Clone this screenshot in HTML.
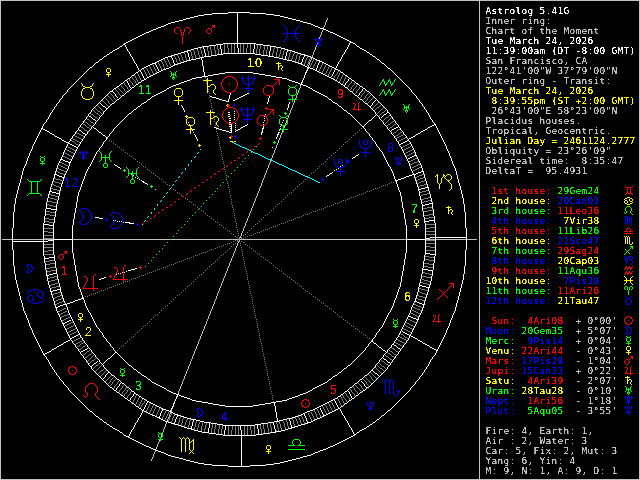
<!DOCTYPE html>
<html><head><meta charset="utf-8"><title>Astrolog 5.41G</title>
<style>
html,body{margin:0;padding:0;background:#000;overflow:hidden}
svg{display:block}
#chart path,#chart use{fill:none;stroke-width:1;stroke-linecap:butt;shape-rendering:crispEdges}
.sb{font-family:"DejaVu Sans Mono","Liberation Mono",monospace;font-size:9.5px;letter-spacing:0.281px;white-space:pre}
.hn{font-family:"Liberation Sans",sans-serif;font-size:12.5px;text-anchor:middle}
.hn2{text-anchor:start;letter-spacing:1.05px}
</style></head><body>
<svg width="640" height="480" viewBox="0 0 640 480">
<defs><path id="s1x2" d="M-6 -8h3M4 -8h3M-7 -7h1M-3 -7h1M3 -7h1M7 -7h1M-8 -6h1M-2 -6h1M2 -6h1M8 -6h1M-8 -5h1M-2 -5h1M2 -5h1M8 -5h1M-8 -4h1M-2 -4h1M2 -4h1M8 -4h1M-7 -3h1M-1 -3h1M1 -3h1M7 -3h1M-6 -2h1M-1 -2h1M1 -2h1M6 -2h1M-1 -1h1M1 -1h1M-1 0h1M1 0h1M0 1h1M0 2h1M0 3h1M0 4h1M0 5h1M0 6h1M0 7h1M0 8h1"/><path id="o5x1" d="M2 -4h3M3 -3h2M2 -2h1M4 -2h1M-2 -1h2M1 -1h1M-3 0h1M0 0h1M-4 1h1M1 1h1M-4 2h1M1 2h1M-3 3h1M0 3h1M-2 4h2"/><path id="s2x2" d="M-6 -8h1M6 -8h1M-5 -7h1M5 -7h1M-5 -6h1M5 -6h1M-4 -5h2M3 -5h2M-2 -4h5M-4 -3h2M3 -3h2M-5 -2h1M5 -2h1M-5 -1h1M5 -1h1M-6 0h1M6 0h1M-6 1h1M6 1h1M-6 2h1M6 2h1M-6 3h1M6 3h1M-6 4h1M6 4h1M-5 5h1M5 5h1M-5 6h1M5 6h1M-4 7h2M3 7h2M-2 8h5"/><path id="o4x1" d="M-1 -4h3M-2 -3h1M2 -3h1M-2 -2h1M2 -2h1M-2 -1h1M2 -1h1M-1 0h3M0 1h1M-2 2h5M0 3h1M0 4h1"/><path id="s3x2" d="M-6 -8h1M8 -8h1M-5 -7h1M7 -7h1M-4 -6h11M-2 -5h1M4 -5h1M-2 -4h1M4 -4h1M-2 -3h1M4 -3h1M-2 -2h1M4 -2h1M-2 -1h1M4 -1h1M-2 0h1M4 0h1M-2 1h1M4 1h1M-2 2h1M4 2h1M-2 3h1M4 3h1M-2 4h1M4 4h1M-2 5h1M4 5h1M-4 6h11M-5 7h1M7 7h1M-6 8h1M8 8h1"/><path id="o3x1" d="M-2 -4h1M2 -4h1M-1 -3h3M-2 -2h1M2 -2h1M-2 -1h1M2 -1h1M-2 0h1M2 0h1M-1 1h3M0 2h1M-2 3h5M0 4h1"/><path id="s4x2" d="M-2 -7h5M-5 -6h3M3 -6h1M-6 -5h1M4 -5h3M-7 -4h1M3 -4h1M7 -4h1M-8 -3h1M2 -3h1M8 -3h1M2 -2h1M8 -2h1M-6 -1h3M2 -1h1M8 -1h1M-7 0h1M-3 0h1M3 0h1M7 0h1M-8 1h1M-2 1h1M4 1h3M-8 2h1M-2 2h1M-8 3h1M-2 3h1M8 3h1M-7 4h1M-3 4h1M7 4h1M-6 5h3M6 5h1M-3 6h1M3 6h3M-2 7h5"/><path id="o2x1" d="M-2 -4h3M-3 -3h1M1 -3h2M-2 -2h1M2 -2h1M-1 -1h1M3 -1h1M-1 0h1M3 0h1M-1 1h1M3 1h1M-2 2h1M2 2h1M-3 3h1M1 3h2M-2 4h3"/><path id="s5x2" d="M-2 -8h5M-3 -7h1M3 -7h1M-4 -6h1M4 -6h1M-5 -5h1M5 -5h1M-6 -4h1M6 -4h1M-6 -3h1M6 -3h1M-6 -2h1M6 -2h1M-6 -1h1M6 -1h1M-6 0h1M6 0h1M-5 1h1M5 1h1M-4 2h1M4 2h1M-4 3h1M4 3h1M-8 4h1M-4 4h1M4 4h1M-7 5h1M-5 5h1M5 5h1M-6 6h1M6 6h1M7 7h1M8 8h1"/><path id="o1x1" d="M-1 -4h3M-3 -3h2M2 -3h2M-3 -2h1M3 -2h1M-4 -1h1M4 -1h1M-4 0h1M0 0h1M4 0h1M-4 1h1M4 1h1M-3 2h1M3 2h1M-3 3h2M2 3h2M-1 4h3"/><path id="s6x2" d="M-8 -8h1M-4 -8h1M0 -8h1M-7 -7h1M-5 -7h1M-3 -7h1M-1 -7h1M1 -7h1M-6 -6h1M-2 -6h1M2 -6h1M6 -6h1M-6 -5h1M-2 -5h1M2 -5h1M5 -5h2M-6 -4h1M-2 -4h1M2 -4h1M4 -4h1M6 -4h1M-6 -3h1M-2 -3h1M2 -3h2M6 -3h1M-6 -2h1M-2 -2h1M2 -2h1M6 -2h1M-6 -1h1M-2 -1h1M2 -1h1M6 -1h1M-6 0h1M-2 0h1M2 0h1M6 0h1M-6 1h1M-2 1h1M2 1h1M6 1h1M-6 2h1M-2 2h1M2 2h1M6 2h1M-6 3h1M-2 3h1M2 3h1M6 3h1M-6 4h1M-2 4h1M2 4h1M6 4h1M-6 5h1M-2 5h1M3 5h1M5 5h1M-6 6h1M-2 6h1M4 6h1M3 7h1M5 7h1M2 8h1M6 8h1"/><path id="s7x2" d="M-2 -4h5M-3 -3h1M3 -3h1M-4 -2h1M4 -2h1M-4 -1h1M4 -1h1M-4 0h1M4 0h1M-3 1h1M3 1h1M-8 2h7M2 2h7M-8 6h17"/><path id="s8x2" d="M-8 -8h1M-4 -8h1M0 -8h1M-7 -7h1M-5 -7h1M-3 -7h1M-1 -7h1M1 -7h1M-6 -6h1M-2 -6h1M2 -6h1M-6 -5h1M-2 -5h1M2 -5h1M-6 -4h1M-2 -4h1M2 -4h1M-6 -3h1M-2 -3h1M2 -3h1M-6 -2h1M-2 -2h1M2 -2h1M-6 -1h1M-2 -1h1M2 -1h1M-6 0h1M-2 0h1M2 0h1M-6 1h1M-2 1h1M2 1h1M-6 2h1M-2 2h1M2 2h1M-6 3h1M-2 3h1M2 3h1M7 3h1M-6 4h1M-2 4h1M2 4h1M6 4h3M-6 5h1M-2 5h1M2 5h1M7 5h1M-6 6h1M-2 6h1M2 6h1M7 6h1M3 7h1M6 7h1M4 8h2"/><path id="o10x1" d="M-3 -4h1M0 -4h1M3 -4h1M-3 -3h1M-1 -3h1M1 -3h1M3 -3h1M-3 -2h1M0 -2h1M3 -2h1M-2 -1h1M2 -1h1M-1 0h3M0 1h1M-2 2h5M0 3h1M0 4h1"/><path id="s9x2" d="M4 -8h5M7 -7h2M6 -6h1M8 -6h1M5 -5h1M8 -5h1M4 -4h1M8 -4h1M3 -3h1M-6 -2h1M2 -2h1M-5 -1h1M1 -1h1M-4 0h1M0 0h1M-3 1h1M-1 1h1M-2 2h1M-3 3h1M-1 3h1M-4 4h1M0 4h1M-5 5h1M1 5h1M-6 6h1M2 6h1M-7 7h1M-8 8h1"/><path id="o6x1" d="M3 -4h1M-3 -3h2M2 -3h1M-1 -2h1M2 -2h1M-1 -1h1M2 -1h1M-2 0h1M2 0h1M-2 1h1M2 1h1M-3 2h1M2 2h1M-3 3h8M2 4h1"/><path id="s10x2" d="M-6 -8h1M0 -8h1M4 -8h3M-7 -7h2M0 -7h2M3 -7h1M7 -7h1M-8 -6h1M-6 -6h1M0 -6h1M2 -6h1M8 -6h1M-6 -5h1M-1 -5h1M1 -5h1M8 -5h1M-6 -4h1M-2 -4h1M2 -4h1M8 -4h1M-6 -3h1M-2 -3h1M3 -3h1M7 -3h1M-6 -2h1M-2 -2h1M4 -2h3M-6 -1h1M-2 -1h1M5 -1h1M-6 0h1M-2 0h1M6 0h1M-5 1h1M-3 1h1M7 1h1M-4 2h1M8 2h1M-4 3h1M8 3h1M-4 4h1M8 4h1M-4 5h1M8 5h1M-4 6h1M8 6h1M7 7h1M6 8h1"/><path id="o7x1" d="M-1 -4h1M-3 -3h5M-1 -2h1M-1 -1h1M1 -1h2M-1 0h2M3 0h1M-1 1h1M3 1h1M-1 2h1M2 2h1M-1 3h1M2 3h1M3 4h1"/><path id="s11x2" d="M-4 -8h1M2 -8h1M8 -8h1M-5 -7h2M1 -7h2M7 -7h1M-5 -6h1M-3 -6h1M1 -6h1M3 -6h1M7 -6h1M-6 -5h1M-3 -5h1M0 -5h1M3 -5h1M6 -5h1M-7 -4h1M-3 -4h1M-1 -4h1M3 -4h1M5 -4h1M-7 -3h1M-2 -3h2M4 -3h2M-8 -2h1M-2 -2h1M4 -2h1M-4 2h1M2 2h1M8 2h1M-5 3h2M1 3h2M7 3h1M-5 4h1M-3 4h1M1 4h1M3 4h1M7 4h1M-6 5h1M-3 5h1M0 5h1M3 5h1M6 5h1M-7 6h1M-3 6h1M-1 6h1M3 6h1M5 6h1M-7 7h1M-2 7h2M4 7h2M-8 8h1M-2 8h1M4 8h1"/><path id="o8x1" d="M-3 -4h1M3 -4h1M-2 -3h1M2 -3h1M-2 -2h1M0 -2h1M2 -2h1M-2 -1h5M-2 0h1M0 0h1M2 0h1M-3 1h1M0 1h1M3 1h1M-1 2h3M-1 3h1M1 3h1M0 4h1"/><path id="s12x2" d="M-8 -8h1M8 -8h1M-7 -7h1M7 -7h1M-6 -6h1M6 -6h1M-5 -5h1M5 -5h1M-5 -4h1M5 -4h1M-4 -3h1M4 -3h1M-4 -2h1M4 -2h1M-4 -1h1M4 -1h1M-8 0h17M-4 1h1M4 1h1M-4 2h1M4 2h1M-4 3h1M4 3h1M-5 4h1M5 4h1M-5 5h1M5 5h1M-6 6h1M6 6h1M-7 7h1M7 7h1M-8 8h1M8 8h1"/><path id="o9x1" d="M-3 -4h1M0 -4h1M3 -4h1M-4 -3h2M-1 -3h3M3 -3h2M-3 -2h1M0 -2h1M3 -2h1M-2 -1h1M0 -1h1M2 -1h1M-1 0h3M0 1h1M-2 2h5M0 3h1M0 4h1"/><path id="o10x2" d="M-6 -8h1M-1 -8h3M6 -8h1M-6 -7h1M-2 -7h1M2 -7h1M6 -7h1M-6 -6h1M-2 -6h1M2 -6h1M6 -6h1M-6 -5h1M-2 -5h1M2 -5h1M6 -5h1M-6 -4h1M-1 -4h3M6 -4h1M-5 -3h1M5 -3h1M-5 -2h1M5 -2h1M-4 -1h2M3 -1h2M-2 0h5M0 1h1M0 2h1M0 3h1M-4 4h9M0 5h1M0 6h1M0 7h1M0 8h1"/><path id="o9x2" d="M-6 -8h1M0 -8h1M6 -8h1M-6 -7h1M0 -7h1M6 -7h1M-7 -6h3M-2 -6h5M5 -6h3M-6 -5h1M0 -5h1M6 -5h1M-6 -4h1M0 -4h1M6 -4h1M-5 -3h1M0 -3h1M5 -3h1M-5 -2h1M0 -2h1M5 -2h1M-4 -1h2M0 -1h1M3 -1h2M-2 0h5M0 1h1M0 2h1M0 3h1M-4 4h9M0 5h1M0 6h1M0 7h1M0 8h1"/><path id="o8x2" d="M-6 -8h1M6 -8h1M-5 -7h1M5 -7h1M-4 -6h1M4 -6h1M-4 -5h1M4 -5h1M-4 -4h1M0 -4h1M4 -4h1M-4 -3h1M0 -3h1M4 -3h1M-4 -2h9M-4 -1h1M0 -1h1M4 -1h1M-4 0h1M0 0h1M4 0h1M-5 1h1M0 1h1M5 1h1M-6 2h1M0 2h1M6 2h1M0 3h1M-1 4h3M-2 5h1M2 5h1M-2 6h1M2 6h1M-2 7h1M2 7h1M-1 8h3"/><path id="o7x2" d="M-2 -8h1M-2 -7h1M-6 -6h9M-2 -5h1M-2 -4h1M-2 -3h1M-2 -2h1M2 -2h3M-2 -1h1M1 -1h1M5 -1h1M-2 0h3M6 0h1M-2 1h1M6 1h1M-2 2h1M6 2h1M-2 3h1M5 3h1M-2 4h1M4 4h1M-2 5h1M4 5h1M-2 6h1M4 6h1M5 7h1M6 8h1"/><path id="o6x2" d="M6 -8h1M5 -7h1M-5 -6h2M4 -6h1M-3 -5h1M4 -5h1M-2 -4h1M4 -4h1M-2 -3h1M4 -3h1M-2 -2h1M4 -2h1M-3 -1h1M4 -1h1M-3 0h1M4 0h1M-4 1h1M4 1h1M-4 2h1M4 2h1M-5 3h1M4 3h1M-5 4h1M4 4h1M-6 5h1M4 5h1M-6 6h15M4 7h1M4 8h1"/><path id="o5x2" d="M3 -8h6M7 -7h2M6 -6h1M8 -6h1M5 -5h1M8 -5h1M4 -4h1M8 -4h1M3 -3h1M8 -3h1M-5 -2h5M2 -2h1M-6 -1h1M0 -1h2M-7 0h1M1 0h1M-8 1h1M2 1h1M-8 2h1M2 2h1M-8 3h1M2 3h1M-8 4h1M2 4h1M-8 5h1M2 5h1M-7 6h1M1 6h1M-6 7h1M0 7h1M-5 8h5"/><path id="o4x2" d="M-2 -8h5M-3 -7h1M3 -7h1M-4 -6h1M4 -6h1M-4 -5h1M4 -5h1M-4 -4h1M4 -4h1M-4 -3h1M4 -3h1M-4 -2h1M4 -2h1M-3 -1h1M3 -1h1M-2 0h5M0 1h1M0 2h1M0 3h1M-4 4h9M0 5h1M0 6h1M0 7h1M0 8h1"/><path id="o3x2" d="M-4 -8h1M4 -8h1M-3 -7h1M3 -7h1M-2 -6h5M-3 -5h1M3 -5h1M-4 -4h1M4 -4h1M-4 -3h1M4 -3h1M-4 -2h1M4 -2h1M-4 -1h1M4 -1h1M-4 0h1M4 0h1M-3 1h1M3 1h1M-2 2h5M0 3h1M0 4h1M0 5h1M-4 6h9M0 7h1M0 8h1"/><path id="o2x2" d="M-4 -8h5M-5 -7h1M1 -7h2M-6 -6h1M3 -6h1M-5 -5h1M4 -5h1M-4 -4h1M5 -4h1M-3 -3h1M5 -3h1M-3 -2h1M6 -2h1M-2 -1h1M6 -1h1M-2 0h1M6 0h1M-2 1h1M6 1h1M-3 2h1M6 2h1M-3 3h1M5 3h1M-4 4h1M5 4h1M-5 5h1M4 5h1M-6 6h1M3 6h1M-5 7h1M1 7h2M-4 8h5"/><path id="o1x2" d="M-2 -8h5M-4 -7h2M3 -7h2M-5 -6h1M5 -6h1M-6 -5h1M6 -5h1M-7 -4h1M7 -4h1M-7 -3h1M7 -3h1M-8 -2h1M8 -2h1M-8 -1h1M8 -1h1M-8 0h1M0 0h1M8 0h1M-8 1h1M8 1h1M-8 2h1M8 2h1M-7 3h1M7 3h1M-7 4h1M7 4h1M-6 5h1M6 5h1M-5 6h1M5 6h1M-4 7h2M3 7h2M-2 8h5"/><path id="s3x1" d="M-3 -4h1M4 -4h1M-2 -3h6M-1 -2h1M2 -2h1M-1 -1h1M2 -1h1M-1 0h1M2 0h1M-1 1h1M2 1h1M-1 2h1M2 2h1M-2 3h6M-3 4h1M4 4h1"/><path id="s4x1" d="M-1 -3h3M-3 -2h2M2 -2h2M-4 -1h1M1 -1h1M4 -1h1M-3 0h2M1 0h1M4 0h1M-4 1h1M-1 1h1M2 1h2M-4 2h1M-1 2h1M4 2h1M-3 3h2M2 3h2M-1 4h3"/><path id="s5x1" d="M-1 -4h3M-2 -3h1M2 -3h1M-3 -2h1M3 -2h1M-3 -1h1M3 -1h1M-3 0h1M3 0h1M-2 1h1M2 1h1M-4 2h1M-2 2h1M2 2h1M-3 3h1M3 3h1M4 4h1"/><path id="s6x1" d="M-4 -4h1M-2 -4h1M0 -4h1M-3 -3h1M-1 -3h1M1 -3h1M3 -3h1M-3 -2h1M-1 -2h1M1 -2h3M-3 -1h1M-1 -1h1M1 -1h1M3 -1h1M-3 0h1M-1 0h1M1 0h1M3 0h1M-3 1h1M-1 1h1M1 1h1M3 1h1M-3 2h1M-1 2h1M1 2h1M3 2h1M-3 3h1M-1 3h1M2 3h1M1 4h1M3 4h1"/><path id="s7x1" d="M-1 -2h3M-2 -1h1M2 -1h1M-2 0h1M2 0h1M-4 1h4M1 1h4M-4 3h9"/><path id="s8x1" d="M-4 -4h1M-2 -4h1M0 -4h1M-3 -3h1M-1 -3h1M1 -3h1M-3 -2h1M-1 -2h1M1 -2h1M-3 -1h1M-1 -1h1M1 -1h1M-3 0h1M-1 0h1M1 0h1M-3 1h1M-1 1h1M1 1h1M-3 2h1M-1 2h1M1 2h1M4 2h1M-3 3h1M-1 3h1M1 3h1M4 3h1M2 4h2"/><path id="s9x1" d="M2 -4h3M3 -3h2M2 -2h1M4 -2h1M-3 -1h1M1 -1h1M-2 0h1M0 0h1M-1 1h1M-2 2h1M0 2h1M-3 3h1M1 3h1M-4 4h1"/><path id="s10x1" d="M-3 -4h1M0 -4h1M2 -4h2M-4 -3h2M0 -3h2M4 -3h1M-3 -2h1M-1 -2h1M1 -2h1M4 -2h1M-3 -1h1M-1 -1h1M2 -1h2M-3 0h1M-1 0h1M3 0h1M-2 1h1M4 1h1M-2 2h1M4 2h1M-2 3h1M4 3h1M3 4h1"/><path id="s11x1" d="M-2 -4h1M1 -4h1M4 -4h1M-3 -3h2M0 -3h2M3 -3h1M-3 -2h1M-1 -2h2M2 -2h2M-4 -1h1M-1 -1h1M2 -1h1M-2 1h1M1 1h1M4 1h1M-3 2h2M0 2h2M3 2h1M-3 3h1M-1 3h2M2 3h2M-4 4h1M-1 4h1M2 4h1"/><path id="s12x1" d="M-4 -4h1M4 -4h1M-3 -3h1M3 -3h1M-2 -2h1M2 -2h1M-2 -1h1M2 -1h1M-4 0h9M-2 1h1M2 1h1M-2 2h1M2 2h1M-3 3h1M3 3h1M-4 4h1M4 4h1"/><path id="s1x1" d="M-3 -4h2M2 -4h2M-4 -3h1M-1 -3h1M1 -3h1M4 -3h1M-4 -2h1M-1 -2h1M1 -2h1M4 -2h1M-3 -1h1M-1 -1h1M1 -1h1M3 -1h1M0 0h1M0 1h1M0 2h1M0 3h1M0 4h1"/><path id="s2x1" d="M-3 -4h1M3 -4h1M-2 -3h1M2 -3h1M-1 -2h3M-2 -1h1M2 -1h1M-3 0h1M3 0h1M-3 1h1M3 1h1M-3 2h1M3 2h1M-2 3h1M2 3h1M-1 4h3"/>
<filter id="crisp2" x="0" y="0" width="640" height="480" filterUnits="userSpaceOnUse" color-interpolation-filters="sRGB"><feComponentTransfer><feFuncA type="discrete" tableValues="0 0 1 1 1"/></feComponentTransfer></filter>
<filter id="crisp" x="0" y="0" width="640" height="480" filterUnits="userSpaceOnUse" color-interpolation-filters="sRGB"><feComponentTransfer><feFuncA type="table" tableValues="0 0 0 1 1 1 1"/></feComponentTransfer></filter>
</defs>
<rect x="0" y="0" width="640" height="480" fill="#000"/>
<g id="chart" transform="translate(0 .5)">
<g id="axes">
<path d="M327 18h1M327 19h1M326 20h1M326 21h1M325 22h1M325 23h1M325 24h1M324 25h1M324 26h1M323 27h1M323 28h1M323 29h1M322 30h1M322 31h1M321 32h1M321 33h1M321 34h1M320 35h1M320 36h1M319 37h1M319 38h1M319 39h1M318 40h1M318 41h1M317 42h1M317 43h1M317 44h1M316 45h1M316 46h1M315 47h1M315 48h1M315 49h1M314 50h1M314 51h1M313 52h1M313 53h1M313 54h1M312 55h1M312 56h1M311 57h1M311 58h1M311 59h1M310 60h1M310 61h1M309 62h1M309 63h1M309 64h1M308 65h1M308 66h1M307 67h1M307 68h1M307 69h1M306 70h1M306 71h1M305 72h1M305 73h1M305 74h1M304 75h1M304 76h1M304 77h1M303 78h1M303 79h1M302 80h1M302 81h1M302 82h1M301 83h1M301 84h1M300 85h1M300 86h1M300 87h1M299 88h1M299 89h1M298 90h1M298 91h1M298 92h1M297 93h1M297 94h1M296 95h1M296 96h1M296 97h1M295 98h1M295 99h1M294 100h1M294 101h1M294 102h1M293 103h1M293 104h1M292 105h1M292 106h1M292 107h1M291 108h1M291 109h1M290 110h1M290 111h1M290 112h1M289 113h1M289 114h1M288 115h1M288 116h1M288 117h1M287 118h1M287 119h1M286 120h1M286 121h1M286 122h1M285 123h1M285 124h1M284 125h1M284 126h1M284 127h1M283 128h1M283 129h1M282 130h1M282 131h1M282 132h1M281 133h1M281 134h1M280 135h1M280 136h1M280 137h1M279 138h1M279 139h1M278 140h1M278 141h1M278 142h1M277 143h1M277 144h1M276 145h1M276 146h1M276 147h1M275 148h1M275 149h1M274 150h1M274 151h1M274 152h1M273 153h1M273 154h1M272 155h1M272 156h1M272 157h1M271 158h1M271 159h1M270 160h1M270 161h1M270 162h1M269 163h1M269 164h1M268 165h1M268 166h1M268 167h1M267 168h1M267 169h1M266 170h1M266 171h1M266 172h1M265 173h1M265 174h1M264 175h1M264 176h1M264 177h1M263 178h1M263 179h1M262 180h1M262 181h1M262 182h1M261 183h1M261 184h1M261 185h1M260 186h1M260 187h1M259 188h1M259 189h1M259 190h1M258 191h1M258 192h1M257 193h1M257 194h1M257 195h1M256 196h1M256 197h1M255 198h1M255 199h1M255 200h1M254 201h1M254 202h1M253 203h1M253 204h1M253 205h1M252 206h1M252 207h1M251 208h1M251 209h1M251 210h1M250 211h1M250 212h1M249 213h1M249 214h1M249 215h1M248 216h1M248 217h1M247 218h1M247 219h1M247 220h1M246 221h1M246 222h1M245 223h1M245 224h1M245 225h1M244 226h1M244 227h1M243 228h1M243 229h1M243 230h1M242 231h1M242 232h1M241 233h1M241 234h1M241 235h1M240 236h1M240 237h1M239 238h1M2 239h475M239 240h1M238 241h1M238 242h1M237 243h1M237 244h1M237 245h1M236 246h1M236 247h1M235 248h1M235 249h1M235 250h1M234 251h1M234 252h1M233 253h1M233 254h1M233 255h1M232 256h1M232 257h1M231 258h1M231 259h1M231 260h1M230 261h1M230 262h1M229 263h1M229 264h1M229 265h1M228 266h1M228 267h1M227 268h1M227 269h1M227 270h1M226 271h1M226 272h1M225 273h1M225 274h1M225 275h1M224 276h1M224 277h1M223 278h1M223 279h1M223 280h1M222 281h1M222 282h1M221 283h1M221 284h1M221 285h1M220 286h1M220 287h1M219 288h1M219 289h1M219 290h1M218 291h1M218 292h1M217 293h1M217 294h1M217 295h1M216 296h1M216 297h1M216 298h1M215 299h1M215 300h1M214 301h1M214 302h1M214 303h1M213 304h1M213 305h1M212 306h1M212 307h1M212 308h1M211 309h1M211 310h1M210 311h1M210 312h1M210 313h1M209 314h1M209 315h1M208 316h1M208 317h1M208 318h1M207 319h1M207 320h1M206 321h1M206 322h1M206 323h1M205 324h1M205 325h1M204 326h1M204 327h1M204 328h1M203 329h1M203 330h1M202 331h1M202 332h1M202 333h1M201 334h1M201 335h1M200 336h1M200 337h1M200 338h1M199 339h1M199 340h1M198 341h1M198 342h1M198 343h1M197 344h1M197 345h1M196 346h1M196 347h1M196 348h1M195 349h1M195 350h1M194 351h1M194 352h1M194 353h1M193 354h1M193 355h1M192 356h1M192 357h1M192 358h1M191 359h1M191 360h1M190 361h1M190 362h1M190 363h1M189 364h1M189 365h1M188 366h1M188 367h1M188 368h1M187 369h1M187 370h1M186 371h1M186 372h1M186 373h1M185 374h1M185 375h1M184 376h1M184 377h1M184 378h1M183 379h1M183 380h1M182 381h1M182 382h1M182 383h1M181 384h1M181 385h1M180 386h1M180 387h1M180 388h1M179 389h1M179 390h1M178 391h1M178 392h1M178 393h1M177 394h1M177 395h1M176 396h1M176 397h1M176 398h1M175 399h1M175 400h1M174 401h1M174 402h1M174 403h1M173 404h1M173 405h1M173 406h1M172 407h1M172 408h1M171 409h1M171 410h1M171 411h1M170 412h1M170 413h1M169 414h1M169 415h1M169 416h1M168 417h1M168 418h1M167 419h1M167 420h1M167 421h1M166 422h1M166 423h1M165 424h1M165 425h1M165 426h1M164 427h1M164 428h1M163 429h1M163 430h1M163 431h1M162 432h1M162 433h1M161 434h1M161 435h1M161 436h1M160 437h1M160 438h1M159 439h1M159 440h1M159 441h1M158 442h1M158 443h1M157 444h1M157 445h1M157 446h1M156 447h1M156 448h1M155 449h1M155 450h1M155 451h1M154 452h1M154 453h1M153 454h1M153 455h1M153 456h1M152 457h1M152 458h1M151 459h1M151 460h1" stroke="#c0c0c0"/>
</g>
<g id="ticks">
<path d="M224 44h1M227 44h1M231 44h1M234 44h1M240 44h1M243 44h1M247 44h1M250 44h1M214 45h1M217 45h1M224 45h1M227 45h1M231 45h1M234 45h1M240 45h1M243 45h1M247 45h1M250 45h1M257 45h1M260 45h1M264 45h1M210 46h1M214 46h1M217 46h1M224 46h1M227 46h1M231 46h1M234 46h1M240 46h1M243 46h1M247 46h1M250 46h1M257 46h1M260 46h1M264 46h1M267 46h1M207 47h1M210 47h1M214 47h1M217 47h1M224 47h1M227 47h1M231 47h1M234 47h1M240 47h1M243 47h1M247 47h1M250 47h1M257 47h1M260 47h1M264 47h1M267 47h1M274 47h1M197 48h1M200 48h1M207 48h1M210 48h1M214 48h1M217 48h1M224 48h1M228 48h1M231 48h1M234 48h1M240 48h1M243 48h1M246 48h1M250 48h1M257 48h1M260 48h1M264 48h1M267 48h1M274 48h1M277 48h1M281 48h1M193 49h1M197 49h1M200 49h1M207 49h1M210 49h1M214 49h1M218 49h1M224 49h1M228 49h1M231 49h1M234 49h1M240 49h1M243 49h1M246 49h1M250 49h1M256 49h1M259 49h1M264 49h1M267 49h1M273 49h1M277 49h1M281 49h1M284 49h1M190 50h1M193 50h1M197 50h1M201 50h1M207 50h1M211 50h1M215 50h1M218 50h1M224 50h1M228 50h1M231 50h1M234 50h1M240 50h1M243 50h1M246 50h1M250 50h1M256 50h1M259 50h1M263 50h1M266 50h1M273 50h1M277 50h1M280 50h1M284 50h1M190 51h1M194 51h1M198 51h1M201 51h1M208 51h1M211 51h1M215 51h1M218 51h1M224 51h1M228 51h1M231 51h1M234 51h1M240 51h1M243 51h1M246 51h1M250 51h1M256 51h1M259 51h1M263 51h1M266 51h1M273 51h1M277 51h1M280 51h1M283 51h1M290 51h1M184 52h1M191 52h1M194 52h1M198 52h1M201 52h1M208 52h1M211 52h1M215 52h1M218 52h1M224 52h1M228 52h1M231 52h1M234 52h1M240 52h1M243 52h1M246 52h1M250 52h1M256 52h1M259 52h1M263 52h1M266 52h1M273 52h1M276 52h1M280 52h1M283 52h1M290 52h1M294 52h1M180 53h1M184 53h1M191 53h1M194 53h1M198 53h1M201 53h1M208 53h1M211 53h1M215 53h1M218 53h1M224 53h1M256 53h1M259 53h1M263 53h1M266 53h1M272 53h1M276 53h1M280 53h1M283 53h1M289 53h1M294 53h1M297 53h1M177 54h1M180 54h1M185 54h1M191 54h1M194 54h1M198 54h1M202 54h1M208 54h1M211 54h1M215 54h1M263 54h1M266 54h1M272 54h1M276 54h1M279 54h1M283 54h1M289 54h1M293 54h1M297 54h1M300 54h1M174 55h1M177 55h1M181 55h1M185 55h1M191 55h1M195 55h1M199 55h1M202 55h1M208 55h1M272 55h1M276 55h1M279 55h1M282 55h1M289 55h1M293 55h1M296 55h1M300 55h1M174 56h1M178 56h1M181 56h1M185 56h1M192 56h1M195 56h1M199 56h1M202 56h1M276 56h1M279 56h1M282 56h1M289 56h1M292 56h1M296 56h1M299 56h1M307 56h1M175 57h1M178 57h1M182 57h1M185 57h1M192 57h1M195 57h1M199 57h1M282 57h1M288 57h1M292 57h1M296 57h1M299 57h1M307 57h1M310 57h1M167 58h1M175 58h1M179 58h1M182 58h1M186 58h1M192 58h1M288 58h1M292 58h1M296 58h1M299 58h1M306 58h1M310 58h1M164 59h1M167 59h1M176 59h1M179 59h1M182 59h1M186 59h1M288 59h1M291 59h1M295 59h1M299 59h1M306 59h1M309 59h1M313 59h1M161 60h1M164 60h1M168 60h1M176 60h1M179 60h1M183 60h1M186 60h1M291 60h1M295 60h1M298 60h1M305 60h1M309 60h1M313 60h1M316 60h1M161 61h1M165 61h1M168 61h1M176 61h1M180 61h1M183 61h1M295 61h1M298 61h1M305 61h1M308 61h1M312 61h1M316 61h1M158 62h1M162 62h1M165 62h1M169 62h1M177 62h1M180 62h1M298 62h1M305 62h1M308 62h1M312 62h1M315 62h1M158 63h1M162 63h1M166 63h1M169 63h1M177 63h1M304 63h1M308 63h1M311 63h1M315 63h1M322 63h1M152 64h1M159 64h1M163 64h1M166 64h1M170 64h1M304 64h1M307 64h1M311 64h1M314 64h1M322 64h1M326 64h1M153 65h1M159 65h1M163 65h1M167 65h1M170 65h1M307 65h1M310 65h1M314 65h1M321 65h1M325 65h1M149 66h1M153 66h1M160 66h1M163 66h1M167 66h1M310 66h1M313 66h1M321 66h1M325 66h1M329 66h1M150 67h1M154 67h1M160 67h1M164 67h1M313 67h1M320 67h1M324 67h1M328 67h1M332 67h1M146 68h1M150 68h1M154 68h1M161 68h1M164 68h1M320 68h1M324 68h1M328 68h1M331 68h1M143 69h1M147 69h1M151 69h1M155 69h1M161 69h1M319 69h1M323 69h1M327 69h1M331 69h1M144 70h1M147 70h1M151 70h1M155 70h1M319 70h1M323 70h1M327 70h1M330 70h1M144 71h1M148 71h1M152 71h1M156 71h1M322 71h1M326 71h1M330 71h1M338 71h1M145 72h1M148 72h1M152 72h1M156 72h1M322 72h1M326 72h1M329 72h1M337 72h1M340 72h1M137 73h1M145 73h1M149 73h1M153 73h1M325 73h1M329 73h1M337 73h1M339 73h1M138 74h1M146 74h1M149 74h1M328 74h1M336 74h1M339 74h1M343 74h1M134 75h1M138 75h1M146 75h1M150 75h1M328 75h1M335 75h1M338 75h1M342 75h1M131 76h1M135 76h1M139 76h1M147 76h1M334 76h1M338 76h1M342 76h1M346 76h1M132 77h1M135 77h1M139 77h1M334 77h1M337 77h1M341 77h1M345 77h1M128 78h1M132 78h1M136 78h1M140 78h1M333 78h1M337 78h1M341 78h1M345 78h1M129 79h1M133 79h1M136 79h1M140 79h1M336 79h1M340 79h1M344 79h1M129 80h1M134 80h1M137 80h1M141 80h1M340 80h1M344 80h1M352 80h1M130 81h1M135 81h1M137 81h1M339 81h1M343 81h1M351 81h1M123 82h1M131 82h1M135 82h1M138 82h1M343 82h1M351 82h1M355 82h1M124 83h1M132 83h1M136 83h1M342 83h1M350 83h1M354 83h1M120 84h1M124 84h1M132 84h1M349 84h1M354 84h1M357 84h1M121 85h1M125 85h1M133 85h1M348 85h1M353 85h1M356 85h1M121 86h1M126 86h1M348 86h1M352 86h1M356 86h1M360 86h1M117 87h1M122 87h1M127 87h1M347 87h1M351 87h1M355 87h1M359 87h1M118 88h1M123 88h1M127 88h1M351 88h1M354 88h1M359 88h1M115 89h1M119 89h1M124 89h1M128 89h1M350 89h1M353 89h1M358 89h1M116 90h1M120 90h1M124 90h1M353 90h1M357 90h1M365 90h1M117 91h1M121 91h1M125 91h1M352 91h1M356 91h1M364 91h1M118 92h1M122 92h1M356 92h1M364 92h1M110 93h1M118 93h1M123 93h1M355 93h1M363 93h1M368 93h1M111 94h1M119 94h1M362 94h1M367 94h1M107 95h1M112 95h1M120 95h1M361 95h1M366 95h1M370 95h1M108 96h1M113 96h1M361 96h1M365 96h1M369 96h1M109 97h1M113 97h1M360 97h1M365 97h1M368 97h1M373 97h1M105 98h1M110 98h1M114 98h1M364 98h1M367 98h1M372 98h1M106 99h1M111 99h1M115 99h1M363 99h1M367 99h1M371 99h1M102 100h1M107 100h1M112 100h1M366 100h1M370 100h1M103 101h1M108 101h1M113 101h1M365 101h1M369 101h1M104 102h1M108 102h1M368 102h1M378 102h1M105 103h1M109 103h1M367 103h1M377 103h1M106 104h1M110 104h1M376 104h1M97 105h1M107 105h1M375 105h1M380 105h1M98 106h1M108 106h1M374 106h1M379 106h1M99 107h1M373 107h1M377 107h2M383 107h1M95 108h1M100 108h1M372 108h1M376 108h1M382 108h1M96 109h1M101 109h1M375 109h1M381 109h1M93 110h1M97 110h1M102 110h1M374 110h1M380 110h1M385 110h1M94 111h1M98 111h2M103 111h1M379 111h1M384 111h1M95 112h1M100 112h1M378 112h1M382 112h2M90 113h1M96 113h2M101 113h1M377 113h1M381 113h1M91 114h2M98 114h1M380 114h1M93 115h1M99 115h1M379 115h1M389 115h1M94 116h1M388 116h1M95 117h2M386 117h2M391 117h1M86 118h1M97 118h1M385 118h1M390 118h1M87 119h2M384 119h1M389 119h1M89 120h1M383 120h1M388 120h1M394 120h1M84 121h1M90 121h1M387 121h1M392 121h2M85 122h2M91 122h2M386 122h1M391 122h1M82 123h1M87 123h1M93 123h1M385 123h1M390 123h1M396 123h1M83 124h2M88 124h1M388 124h2M394 124h2M85 125h1M89 125h2M387 125h1M393 125h1M80 126h1M86 126h1M91 126h1M392 126h1M81 127h2M87 127h2M390 127h2M83 128h1M89 128h1M389 128h1M400 128h1M84 129h1M398 129h2M85 130h2M397 130h1M87 131h1M396 131h1M402 131h1M76 132h1M394 132h2M400 132h2M77 133h2M393 133h1M399 133h1M79 134h2M398 134h1M403 134h1M74 135h1M81 135h2M396 135h2M401 135h2M75 136h2M83 136h1M395 136h1M399 136h2M77 137h2M397 137h2M405 137h1M72 138h1M79 138h2M396 138h1M403 138h2M73 139h2M81 139h1M401 139h2M71 140h1M75 140h2M399 140h2M72 141h2M77 141h2M398 141h1M74 142h1M79 142h1M75 143h1M409 143h1M76 144h2M407 144h2M78 145h1M405 145h2M67 146h1M403 146h2M410 146h1M68 147h2M402 147h1M408 147h2M70 148h2M406 148h2M66 149h1M72 149h2M404 149h2M412 149h1M67 150h2M74 150h2M403 150h1M410 150h2M69 151h2M408 151h2M64 152h1M71 152h2M406 152h2M413 152h2M65 153h2M73 153h1M405 153h1M411 153h2M67 154h2M409 154h2M69 155h2M407 155h2M63 156h2M71 156h2M406 156h1M65 157h2M67 158h2M415 158h2M69 159h2M413 159h2M411 160h2M409 161h2M417 161h2M60 162h2M414 162h3M62 163h2M412 163h2M64 164h2M410 164h2M418 164h2M59 165h2M66 165h2M416 165h2M61 166h2M414 166h2M63 167h2M412 167h2M419 167h2M57 168h2M65 168h2M417 168h2M59 169h2M415 169h2M61 170h3M413 170h2M56 171h2M64 171h2M58 172h2M60 173h3M63 174h2M422 174h2M419 175h3M417 176h2M415 177h2M423 177h2M54 178h2M420 178h3M56 179h4M418 179h2M60 180h3M416 180h2M424 180h2M53 181h2M421 181h3M55 182h4M419 182h2M59 183h3M417 183h2M52 184h2M424 184h3M54 185h2M420 185h4M56 186h3M418 186h2M59 187h2M51 188h2M53 189h4M57 190h3M426 190h3M422 191h4M420 192h2M427 193h3M49 194h2M423 194h4M51 195h4M421 195h2M55 196h3M48 197h2M428 197h3M50 198h4M424 198h4M54 199h3M421 199h3M428 200h3M48 201h4M424 201h4M52 202h5M422 202h2M47 204h2M49 205h4M53 206h3M427 207h5M423 208h4M428 210h5M46 211h4M424 211h4M50 212h5M45 214h5M429 214h5M50 215h5M424 215h5M429 217h5M45 218h4M425 218h4M49 219h5M45 221h4M49 222h5M425 224h10M430 227h5M44 228h9M426 228h4M44 231h4M426 231h9M48 232h5M426 234h9M44 235h9M44 238h9M426 240h9M426 243h9M44 244h9M426 246h4M44 247h9M430 247h5M48 250h5M426 250h9M44 251h4M44 254h10M425 256h4M429 257h5M425 259h4M49 260h5M429 260h5M45 261h4M50 263h5M424 263h5M45 264h5M429 264h5M424 266h4M50 267h5M428 267h5M46 268h4M51 270h5M47 271h4M423 272h2M425 273h4M429 274h3M54 276h3M422 276h4M50 277h4M426 277h5M48 278h2M55 279h3M422 279h2M51 280h4M424 280h4M48 281h3M428 281h3M421 282h2M55 283h3M423 283h4M51 284h4M427 284h3M49 285h2M56 286h3M52 287h4M50 288h2M419 288h2M421 289h4M425 290h3M418 291h2M58 292h3M420 292h2M54 293h4M422 293h3M52 294h2M425 294h2M60 295h2M417 295h2M57 296h3M419 296h4M55 297h2M423 297h3M53 298h2M61 298h2M416 298h2M58 299h3M418 299h4M56 300h2M422 300h3M54 301h2M62 301h2M59 302h3M57 303h2M55 304h2M414 304h2M416 305h2M418 306h3M413 307h2M421 307h2M64 308h2M415 308h2M62 309h2M417 309h3M60 310h2M412 310h2M420 310h2M58 311h2M65 311h2M414 311h2M63 312h2M416 312h2M61 313h2M411 313h2M418 313h2M59 314h2M67 314h2M413 314h2M64 315h3M415 315h2M62 316h2M417 316h2M60 317h2M68 317h2M66 318h2M64 319h2M408 319h2M62 320h2M410 320h2M412 321h2M71 322h2M406 322h1M414 322h2M69 323h2M407 323h2M67 324h2M409 324h2M65 325h2M73 325h1M405 325h1M411 325h2M64 326h1M71 326h2M406 326h2M413 326h2M69 327h2M408 327h2M67 328h2M75 328h1M403 328h1M410 328h2M66 329h1M73 329h2M404 329h2M412 329h1M71 330h2M406 330h2M69 331h2M76 331h1M408 331h2M68 332h1M74 332h2M410 332h2M72 333h2M400 333h1M70 334h2M401 334h2M69 335h1M403 335h1M399 336h1M404 336h1M80 337h1M400 337h2M405 337h2M78 338h2M402 338h2M407 338h1M76 339h2M397 339h1M404 339h2M74 340h2M82 340h1M398 340h2M406 340h1M73 341h1M80 341h2M400 341h2M78 342h2M83 342h1M395 342h1M402 342h2M76 343h2M81 343h2M396 343h2M404 343h1M75 344h1M80 344h1M398 344h2M79 345h1M85 345h1M400 345h2M77 346h2M83 346h2M402 346h1M76 347h1M82 347h1M391 347h1M81 348h1M392 348h2M79 349h2M394 349h1M78 350h1M89 350h1M389 350h1M395 350h1M87 351h2M390 351h2M396 351h2M86 352h1M387 352h1M392 352h1M398 352h1M85 353h1M91 353h1M388 353h2M393 353h1M83 354h2M89 354h2M390 354h1M394 354h2M82 355h1M88 355h1M93 355h1M385 355h1M391 355h1M396 355h1M87 356h1M92 356h1M386 356h2M392 356h2M85 357h2M91 357h1M388 357h1M394 357h1M84 358h1M90 358h1M95 358h1M389 358h1M89 359h1M94 359h1M390 359h2M88 360h1M92 360h2M381 360h1M392 360h1M87 361h1M91 361h1M382 361h2M90 362h1M384 362h1M89 363h1M99 363h1M379 363h1M385 363h1M98 364h1M380 364h1M386 364h2M96 365h2M101 365h1M377 365h1M381 365h1M388 365h1M95 366h1M100 366h1M378 366h1M382 366h2M94 367h1M99 367h1M375 367h1M379 367h1M384 367h1M93 368h1M98 368h1M104 368h1M376 368h1M380 368h2M385 368h1M97 369h1M103 369h1M377 369h1M382 369h1M96 370h1M101 370h2M106 370h1M378 370h1M383 370h1M95 371h1M100 371h1M105 371h1M379 371h1M99 372h1M104 372h1M370 372h1M380 372h1M98 373h1M103 373h1M371 373h1M381 373h1M102 374h1M368 374h1M372 374h1M101 375h1M111 375h1M369 375h1M373 375h1M100 376h1M110 376h1M370 376h1M374 376h1M109 377h1M113 377h1M365 377h1M371 377h1M375 377h1M108 378h1M112 378h1M366 378h1M371 378h1M376 378h1M107 379h1M111 379h1M115 379h1M363 379h1M367 379h1M372 379h1M106 380h1M110 380h1M114 380h1M364 380h1M368 380h1M373 380h1M105 381h1M110 381h1M113 381h1M118 381h1M365 381h1M369 381h1M109 382h1M112 382h1M117 382h1M366 382h1M370 382h1M108 383h1M112 383h1M117 383h1M358 383h1M366 383h1M371 383h1M111 384h1M116 384h1M359 384h1M367 384h1M110 385h1M115 385h1M123 385h1M355 385h1M360 385h1M368 385h1M114 386h1M122 386h1M356 386h1M361 386h1M114 387h1M122 387h1M126 387h1M353 387h1M357 387h1M361 387h1M113 388h1M121 388h1M125 388h1M354 388h1M358 388h1M362 388h1M120 389h1M125 389h1M128 389h1M350 389h1M354 389h1M359 389h1M363 389h1M119 390h1M124 390h1M127 390h1M351 390h1M355 390h1M360 390h1M119 391h1M123 391h1M127 391h1M131 391h1M351 391h1M356 391h1M361 391h1M118 392h1M122 392h1M126 392h1M130 392h1M352 392h1M357 392h1M122 393h1M125 393h1M130 393h1M345 393h1M353 393h1M357 393h1M121 394h1M124 394h1M129 394h1M346 394h1M354 394h1M358 394h1M124 395h1M128 395h1M136 395h1M342 395h1M346 395h1M354 395h1M123 396h1M127 396h1M135 396h1M340 396h1M343 396h1M347 396h1M355 396h1M127 397h1M135 397h1M139 397h1M341 397h1M343 397h1M348 397h1M126 398h1M134 398h1M138 398h1M337 398h1M341 398h1M344 398h1M349 398h1M134 399h1M138 399h1M142 399h1M338 399h1M342 399h1M345 399h1M349 399h1M133 400h1M137 400h1M141 400h1M145 400h1M338 400h1M342 400h1M346 400h1M350 400h1M133 401h1M137 401h1M141 401h1M144 401h1M339 401h1M343 401h1M346 401h1M132 402h1M136 402h1M140 402h1M144 402h1M331 402h1M339 402h1M343 402h1M347 402h1M136 403h1M140 403h1M143 403h1M150 403h1M328 403h1M332 403h1M340 403h1M344 403h1M135 404h1M139 404h1M142 404h1M149 404h1M329 404h1M332 404h1M340 404h1M139 405h1M141 405h1M149 405h1M153 405h1M325 405h1M329 405h1M333 405h1M341 405h1M138 406h1M141 406h1M148 406h1M152 406h1M156 406h1M322 406h1M326 406h1M330 406h1M333 406h1M140 407h1M148 407h1M152 407h1M155 407h1M323 407h1M326 407h1M330 407h1M334 407h1M147 408h1M151 408h1M155 408h1M159 408h1M323 408h1M327 408h1M331 408h1M334 408h1M147 409h1M151 409h1M154 409h1M159 409h1M317 409h1M324 409h1M327 409h1M331 409h1M335 409h1M146 410h1M150 410h1M154 410h1M158 410h1M314 410h1M317 410h1M324 410h1M328 410h1M332 410h1M146 411h1M150 411h1M153 411h1M158 411h1M165 411h1M314 411h1M318 411h1M325 411h1M328 411h1M149 412h1M153 412h1M157 412h1M165 412h1M168 412h1M311 412h1M315 412h1M318 412h1M325 412h1M329 412h1M152 413h1M157 413h1M164 413h1M168 413h1M171 413h1M308 413h1M311 413h1M315 413h1M319 413h1M326 413h1M152 414h1M156 414h1M164 414h1M167 414h1M171 414h1M174 414h1M308 414h1M312 414h1M316 414h1M319 414h1M326 414h1M156 415h1M163 415h1M167 415h1M170 415h1M174 415h1M301 415h1M309 415h1M312 415h1M316 415h1M320 415h1M163 416h1M166 416h1M170 416h1M173 416h1M180 416h1M298 416h1M301 416h1M309 416h1M313 416h1M316 416h1M320 416h1M162 417h1M166 417h1M169 417h1M173 417h1M180 417h1M183 417h1M295 417h1M298 417h1M302 417h1M310 417h1M313 417h1M317 417h1M162 418h1M165 418h1M169 418h1M172 418h1M179 418h1M183 418h1M187 418h1M292 418h1M295 418h1M299 418h1M302 418h1M310 418h1M314 418h1M317 418h1M165 419h1M169 419h1M172 419h1M179 419h1M182 419h1M187 419h1M190 419h1M292 419h1M296 419h1M299 419h1M303 419h1M311 419h1M314 419h1M168 420h1M172 420h1M179 420h1M182 420h1M186 420h1M190 420h1M286 420h1M293 420h1M296 420h1M300 420h1M303 420h1M311 420h1M168 421h1M171 421h1M179 421h1M182 421h1M186 421h1M189 421h1M196 421h1M279 421h1M283 421h1M286 421h1M293 421h1M297 421h1M300 421h1M303 421h1M171 422h1M178 422h1M182 422h1M185 422h1M189 422h1M196 422h1M199 422h1M202 422h1M276 422h1M279 422h1M283 422h1M287 422h1M293 422h1M297 422h1M300 422h1M304 422h1M178 423h1M181 423h1M185 423h1M189 423h1M195 423h1M199 423h1M202 423h1M206 423h1M270 423h1M276 423h1M279 423h1M284 423h1M287 423h1M293 423h1M297 423h1M301 423h1M304 423h1M178 424h1M181 424h1M185 424h1M189 424h1M195 424h1M198 424h1M202 424h1M206 424h1M212 424h1M215 424h1M263 424h1M267 424h1M270 424h1M277 424h1M280 424h1M284 424h1M287 424h1M294 424h1M298 424h1M301 424h1M181 425h1M184 425h1M188 425h1M195 425h1M198 425h1M202 425h1M205 425h1M212 425h1M215 425h1M219 425h1M222 425h1M254 425h1M260 425h1M263 425h1M267 425h1M270 425h1M277 425h1M280 425h1M284 425h1M287 425h1M294 425h1M298 425h1M184 426h1M188 426h1M195 426h1M198 426h1M201 426h1M205 426h1M212 426h1M215 426h1M219 426h1M222 426h1M228 426h1M232 426h1M235 426h1M238 426h1M244 426h1M247 426h1M250 426h1M254 426h1M260 426h1M263 426h1M267 426h1M270 426h1M277 426h1M280 426h1M284 426h1M288 426h1M294 426h1M188 427h1M194 427h1M198 427h1M201 427h1M205 427h1M212 427h1M215 427h1M219 427h1M222 427h1M228 427h1M232 427h1M235 427h1M238 427h1M244 427h1M247 427h1M250 427h1M254 427h1M260 427h1M263 427h1M267 427h1M271 427h1M277 427h1M280 427h1M285 427h1M288 427h1M194 428h1M197 428h1M201 428h1M205 428h1M211 428h1M215 428h1M219 428h1M222 428h1M228 428h1M232 428h1M235 428h1M238 428h1M244 428h1M247 428h1M250 428h1M254 428h1M260 428h1M263 428h1M268 428h1M271 428h1M278 428h1M281 428h1M285 428h1M288 428h1M194 429h1M197 429h1M201 429h1M204 429h1M211 429h1M214 429h1M218 429h1M221 429h1M228 429h1M232 429h1M235 429h1M238 429h1M244 429h1M247 429h1M250 429h1M254 429h1M261 429h1M264 429h1M268 429h1M271 429h1M278 429h1M281 429h1M285 429h1M197 430h1M201 430h1M204 430h1M211 430h1M214 430h1M218 430h1M221 430h1M228 430h1M231 430h1M235 430h1M238 430h1M244 430h1M247 430h1M251 430h1M254 430h1M261 430h1M264 430h1M268 430h1M271 430h1M278 430h1M281 430h1M204 431h1M211 431h1M214 431h1M218 431h1M221 431h1M228 431h1M231 431h1M235 431h1M238 431h1M244 431h1M247 431h1M251 431h1M254 431h1M261 431h1M264 431h1M268 431h1M271 431h1M211 432h1M214 432h1M218 432h1M221 432h1M228 432h1M231 432h1M235 432h1M238 432h1M244 432h1M247 432h1M251 432h1M254 432h1M261 432h1M264 432h1M268 432h1M214 433h1M218 433h1M221 433h1M228 433h1M231 433h1M235 433h1M238 433h1M244 433h1M247 433h1M251 433h1M254 433h1M261 433h1M264 433h1M228 434h1M231 434h1M235 434h1M238 434h1M244 434h1M247 434h1M251 434h1M254 434h1" stroke="#808080"/>
<path d="M237 44h1M254 44h1M220 45h1M237 45h1M254 45h1M220 46h1M237 46h1M254 46h1M270 46h1M203 47h1M220 47h1M237 47h1M254 47h1M270 47h1M203 48h1M220 48h1M238 48h1M254 48h1M270 48h1M204 49h1M221 49h1M238 49h1M253 49h1M270 49h1M204 50h1M221 50h1M238 50h1M253 50h1M270 50h1M287 50h1M187 51h1M204 51h1M221 51h1M238 51h1M253 51h1M269 51h1M287 51h1M187 52h1M204 52h1M221 52h1M238 52h1M253 52h1M269 52h1M286 52h1M188 53h1M205 53h1M221 53h1M253 53h1M269 53h1M286 53h1M188 54h1M205 54h1M269 54h1M286 54h1M188 55h1M205 55h1M269 55h1M286 55h1M304 55h1M171 56h1M188 56h1M285 56h1M304 56h1M171 57h1M189 57h1M285 57h1M303 57h1M172 58h1M189 58h1M285 58h1M303 58h1M172 59h1M189 59h1M302 59h1M173 60h1M302 60h1M173 61h1M302 61h1M319 61h1M173 62h1M301 62h1M319 62h1M155 63h1M174 63h1M301 63h1M318 63h1M155 64h1M174 64h1M318 64h1M156 65h1M317 65h1M156 66h1M317 66h1M157 67h1M317 67h1M157 68h1M316 68h1M158 69h1M316 69h1M335 69h1M158 70h1M334 70h1M140 71h1M334 71h1M141 72h1M333 72h1M141 73h1M333 73h1M142 74h1M332 74h1M142 75h1M332 75h1M143 76h1M331 76h1M143 77h1M144 78h1M349 78h1M348 79h1M126 80h1M348 80h1M127 81h1M347 81h1M127 82h1M346 82h1M128 83h1M345 83h1M128 84h1M345 84h1M129 85h1M344 85h1M129 86h1M130 87h1M363 88h1M362 89h1M362 90h1M112 91h1M361 91h1M113 92h1M360 92h1M114 93h1M359 93h1M115 94h1M359 94h1M115 95h1M358 95h1M116 96h1M117 97h1M375 100h1M374 101h1M373 102h1M100 103h1M372 103h1M101 104h1M372 104h1M102 105h1M371 105h1M103 106h2M370 106h1M105 107h1M106 108h1M387 112h1M386 113h1M384 114h2M88 115h1M383 115h1M89 116h2M382 116h1M91 117h1M381 117h1M92 118h1M93 119h2M95 120h1M398 126h1M396 127h2M394 128h2M78 129h1M392 129h2M79 130h2M391 130h1M81 131h1M82 132h1M83 133h2M85 134h1M407 140h1M405 141h2M403 142h2M69 143h1M401 143h2M70 144h2M400 144h1M72 145h2M74 146h2M76 147h1M414 155h2M412 156h2M410 157h2M408 158h2M61 159h2M63 160h2M65 161h3M68 162h2M421 171h2M418 172h3M416 173h2M55 174h2M414 174h2M57 175h2M59 176h3M62 177h2M425 187h3M421 188h4M419 189h2M50 191h2M52 192h4M56 193h3M429 203h3M425 204h4M423 205h2M46 208h5M51 209h5M429 220h5M425 221h4M44 224h5M49 225h5M430 237h5M426 238h4M48 240h5M44 241h4M425 253h5M430 254h5M49 257h5M45 258h4M423 269h5M428 270h5M53 273h3M49 274h4M47 275h2M420 285h2M422 286h4M426 287h3M57 289h3M53 290h4M51 291h2M415 301h2M417 302h2M419 303h3M63 304h2M422 304h2M60 305h3M58 306h2M56 307h2M409 316h2M411 317h2M413 318h3M416 319h2M69 320h2M67 321h2M65 322h2M63 323h2M402 331h1M403 332h2M405 333h2M78 334h1M407 334h2M76 335h2M409 335h1M74 336h2M72 337h2M71 338h1M393 344h1M394 345h2M396 346h1M397 347h1M87 348h1M398 348h2M85 349h2M400 349h1M83 350h2M81 351h2M80 352h1M383 358h1M384 359h2M386 360h1M97 361h1M387 361h1M96 362h1M388 362h2M94 363h2M390 363h1M93 364h1M92 365h1M91 366h1M372 370h1M373 371h1M108 372h1M374 372h1M107 373h1M375 373h2M106 374h1M377 374h1M105 375h1M378 375h1M105 376h1M104 377h1M103 378h1M361 381h1M362 382h1M120 383h1M363 383h1M119 384h1M364 384h1M119 385h1M364 385h1M118 386h1M365 386h1M117 387h1M366 387h1M116 388h1M116 389h1M115 390h1M348 391h1M349 392h1M134 393h1M349 393h1M133 394h1M350 394h1M133 395h1M350 395h1M132 396h1M351 396h1M131 397h1M351 397h1M130 398h1M352 398h1M130 399h1M129 400h1M334 400h1M335 401h1M147 402h1M335 402h1M146 403h1M336 403h1M146 404h1M336 404h1M145 405h1M337 405h1M145 406h1M337 406h1M144 407h1M338 407h1M144 408h1M320 408h1M143 409h1M162 409h1M320 409h1M162 410h1M321 410h1M161 411h1M321 411h1M161 412h1M322 412h1M160 413h1M322 413h1M160 414h1M304 414h1M323 414h1M160 415h1M177 415h1M304 415h1M323 415h1M159 416h1M177 416h1M305 416h1M159 417h1M176 417h1M305 417h1M176 418h1M306 418h1M175 419h1M289 419h1M306 419h1M175 420h1M193 420h1M289 420h1M306 420h1M175 421h1M193 421h1M290 421h1M307 421h1M174 422h1M192 422h1M290 422h1M307 422h1M174 423h1M192 423h1M209 423h1M273 423h1M290 423h1M192 424h1M209 424h1M273 424h1M290 424h1M192 425h1M209 425h1M225 425h1M257 425h1M274 425h1M291 425h1M191 426h1M209 426h1M225 426h1M240 426h1M257 426h1M274 426h1M291 426h1M191 427h1M209 427h1M225 427h1M240 427h1M257 427h1M274 427h1M291 427h1M191 428h1M208 428h1M225 428h1M240 428h1M257 428h1M274 428h1M208 429h1M225 429h1M240 429h1M258 429h1M275 429h1M208 430h1M224 430h1M241 430h1M258 430h1M275 430h1M208 431h1M224 431h1M241 431h1M258 431h1M275 431h1M208 432h1M224 432h1M241 432h1M258 432h1M224 433h1M241 433h1M258 433h1M224 434h1M241 434h1" stroke="#fff"/>
</g>
<g id="rings">
<path d="M228 12h22M212 13h16M250 13h16M204 14h8M266 14h8M198 15h6M274 15h6M194 16h4M280 16h4M190 17h4M284 17h4M186 18h4M288 18h4M183 19h3M292 19h4M179 20h4M296 20h4M175 21h4M300 21h3M171 22h4M303 22h4M168 23h3M307 23h4M166 24h2M311 24h2M164 25h2M313 25h2M161 26h3M315 26h3M158 27h3M318 27h2M156 28h2M320 28h3M153 29h3M323 29h3M151 30h2M326 30h2M149 31h2M328 31h2M146 32h3M330 32h3M144 33h2M333 33h2M142 34h2M335 34h2M140 35h2M337 35h2M138 36h2M339 36h2M136 37h2M341 37h2M134 38h2M343 38h2M132 39h2M345 39h2M130 40h2M347 40h2M128 41h2M349 41h2M126 42h2M351 42h2M124 43h2M223 43h33M353 43h2M123 44h1M216 44h7M256 44h7M355 44h1M122 45h1M209 45h7M263 45h7M356 45h1M120 46h2M202 46h7M270 46h6M357 46h2M119 47h1M198 47h4M276 47h5M359 47h1M117 48h2M194 48h4M281 48h4M360 48h2M115 49h2M191 49h3M285 49h3M362 49h2M113 50h2M187 50h4M288 50h4M364 50h2M112 51h1M184 51h3M292 51h3M366 51h1M110 52h2M181 52h3M295 52h3M367 52h2M109 53h1M178 53h3M223 53h32M298 53h3M369 53h1M107 54h2M174 54h4M217 54h6M255 54h6M301 54h4M370 54h2M106 55h1M171 55h3M211 55h6M261 55h7M305 55h3M372 55h1M104 56h2M168 56h3M204 56h7M268 56h6M308 56h3M373 56h2M103 57h1M165 57h3M200 57h4M274 57h5M311 57h2M375 57h1M102 58h1M163 58h2M196 58h4M279 58h4M313 58h2M376 58h1M100 59h2M161 59h2M191 59h5M283 59h4M315 59h2M377 59h2M99 60h1M159 60h2M187 60h4M287 60h5M317 60h3M379 60h1M98 61h1M157 61h2M184 61h3M292 61h3M320 61h2M380 61h1M96 62h2M155 62h2M181 62h3M295 62h3M322 62h2M381 62h1M95 63h1M152 63h3M178 63h3M298 63h3M324 63h2M382 63h2M94 64h1M150 64h2M175 64h3M301 64h2M326 64h2M384 64h1M93 65h1M148 65h2M173 65h2M303 65h2M328 65h2M385 65h1M92 66h1M146 66h2M171 66h2M305 66h2M330 66h2M386 66h1M90 67h2M144 67h2M169 67h2M307 67h3M332 67h2M387 67h1M89 68h1M142 68h2M166 68h3M310 68h3M334 68h2M388 68h2M88 69h1M141 69h1M163 69h3M313 69h2M336 69h2M390 69h1M87 70h1M139 70h2M161 70h2M315 70h2M338 70h2M391 70h1M86 71h1M138 71h1M159 71h2M317 71h2M340 71h1M392 71h1M85 72h1M136 72h2M157 72h2M225 72h28M319 72h2M341 72h2M393 72h1M84 73h1M135 73h1M155 73h2M219 73h6M253 73h6M321 73h2M343 73h1M394 73h1M83 74h1M134 74h1M153 74h2M213 74h6M259 74h6M323 74h2M344 74h1M395 74h1M82 75h1M132 75h2M151 75h2M208 75h5M265 75h6M325 75h2M345 75h2M396 75h1M81 76h1M131 76h1M149 76h2M202 76h6M271 76h5M327 76h2M347 76h1M397 76h1M80 77h1M130 77h1M147 77h2M196 77h6M276 77h6M329 77h2M348 77h1M398 77h1M79 78h1M128 78h2M146 78h1M192 78h4M282 78h5M331 78h2M349 78h2M399 78h1M78 79h1M127 79h1M144 79h2M190 79h2M287 79h2M333 79h2M351 79h1M400 79h1M77 80h1M125 80h2M142 80h2M187 80h3M289 80h3M335 80h2M352 80h2M401 80h1M76 81h1M124 81h1M141 81h1M184 81h3M292 81h3M337 81h1M354 81h1M402 81h1M75 82h1M123 82h1M139 82h2M181 82h3M295 82h3M338 82h2M355 82h1M403 82h1M74 83h1M121 83h2M138 83h1M179 83h2M298 83h2M340 83h1M356 83h2M404 83h1M73 84h1M120 84h1M136 84h2M176 84h3M300 84h3M341 84h2M358 84h1M405 84h1M72 85h1M119 85h1M135 85h1M173 85h3M303 85h3M343 85h1M359 85h1M406 85h1M71 86h1M117 86h2M134 86h1M171 86h2M306 86h2M344 86h1M360 86h2M407 86h1M70 87h1M116 87h1M132 87h2M169 87h2M308 87h2M345 87h2M362 87h1M408 87h1M69 88h1M114 88h2M131 88h1M167 88h2M310 88h2M347 88h1M363 88h2M409 88h1M68 89h1M113 89h1M130 89h1M166 89h1M312 89h1M348 89h1M365 89h1M410 89h1M67 90h1M112 90h1M129 90h1M164 90h2M313 90h2M349 90h1M366 90h1M411 90h1M67 91h1M110 91h2M127 91h2M162 91h2M315 91h2M350 91h2M367 91h2M411 91h1M66 92h1M109 92h1M126 92h1M160 92h2M317 92h2M352 92h1M369 92h1M412 92h1M65 93h1M108 93h1M125 93h1M158 93h2M319 93h2M353 93h1M370 93h1M413 93h1M64 94h1M107 94h1M124 94h1M156 94h2M321 94h2M354 94h1M371 94h1M414 94h1M63 95h1M106 95h1M122 95h2M154 95h2M323 95h2M355 95h2M372 95h1M415 95h1M62 96h1M105 96h1M121 96h1M152 96h2M325 96h2M357 96h1M373 96h1M416 96h1M62 97h1M104 97h1M120 97h1M151 97h1M327 97h1M358 97h1M374 97h1M416 97h1M61 98h1M103 98h1M119 98h1M150 98h1M328 98h1M359 98h1M375 98h1M417 98h1M60 99h1M102 99h1M117 99h2M148 99h2M329 99h2M360 99h2M376 99h1M418 99h1M59 100h1M101 100h1M116 100h1M147 100h1M331 100h1M362 100h1M377 100h1M419 100h1M59 101h1M100 101h1M115 101h1M146 101h1M332 101h1M363 101h1M378 101h1M419 101h1M58 102h1M99 102h1M114 102h1M144 102h2M333 102h2M364 102h1M379 102h1M420 102h1M57 103h1M98 103h1M112 103h2M142 103h2M335 103h2M365 103h2M380 103h1M421 103h1M56 104h1M97 104h1M111 104h1M141 104h1M337 104h1M367 104h1M381 104h1M422 104h1M56 105h1M96 105h1M110 105h1M140 105h1M338 105h1M368 105h1M382 105h1M422 105h1M55 106h1M95 106h1M109 106h1M138 106h2M339 106h2M369 106h1M383 106h1M423 106h1M54 107h1M94 107h1M108 107h1M137 107h1M341 107h1M370 107h1M384 107h1M424 107h1M54 108h1M93 108h1M107 108h1M136 108h1M342 108h1M371 108h1M385 108h1M424 108h1M53 109h1M92 109h1M106 109h1M134 109h2M343 109h1M372 109h1M386 109h1M425 109h1M52 110h1M91 110h1M105 110h1M133 110h1M344 110h2M373 110h1M387 110h1M426 110h1M52 111h1M91 111h1M104 111h1M132 111h1M346 111h1M374 111h1M387 111h1M426 111h1M51 112h1M90 112h1M103 112h1M131 112h1M347 112h1M375 112h1M388 112h1M427 112h1M50 113h1M89 113h1M103 113h1M129 113h2M348 113h2M375 113h1M389 113h1M428 113h1M50 114h1M88 114h1M102 114h1M128 114h1M350 114h1M376 114h1M390 114h1M428 114h1M49 115h1M88 115h1M101 115h1M127 115h1M351 115h1M377 115h1M390 115h1M429 115h1M49 116h1M87 116h1M100 116h1M126 116h1M352 116h1M378 116h1M391 116h1M429 116h1M48 117h1M86 117h1M99 117h1M125 117h1M353 117h1M379 117h1M392 117h1M430 117h1M48 118h1M86 118h1M99 118h1M124 118h1M354 118h1M379 118h1M392 118h1M430 118h1M47 119h1M85 119h1M98 119h1M123 119h1M355 119h1M380 119h1M393 119h1M431 119h1M46 120h1M84 120h1M97 120h1M122 120h1M356 120h1M381 120h1M394 120h1M432 120h1M46 121h1M83 121h1M96 121h1M121 121h1M357 121h1M382 121h1M395 121h1M432 121h1M45 122h1M83 122h1M95 122h1M120 122h1M358 122h1M383 122h1M395 122h1M433 122h1M44 123h1M82 123h1M95 123h1M119 123h1M359 123h1M383 123h1M396 123h1M434 123h1M43 124h1M81 124h1M94 124h1M118 124h1M360 124h1M384 124h1M397 124h1M435 124h1M43 125h1M80 125h1M93 125h1M117 125h1M361 125h1M385 125h1M398 125h1M435 125h1M42 126h1M80 126h1M92 126h1M116 126h1M362 126h1M386 126h1M398 126h1M436 126h1M42 127h1M79 127h1M91 127h1M115 127h1M363 127h1M387 127h1M399 127h1M436 127h1M41 128h1M78 128h1M91 128h1M114 128h1M364 128h1M387 128h1M400 128h1M437 128h1M41 129h1M78 129h1M90 129h1M113 129h1M365 129h1M388 129h1M400 129h1M437 129h1M40 130h1M77 130h1M89 130h1M113 130h1M365 130h1M389 130h1M401 130h1M438 130h1M40 131h1M76 131h1M88 131h1M112 131h1M366 131h1M390 131h1M402 131h1M438 131h1M39 132h1M75 132h1M87 132h1M111 132h1M367 132h1M391 132h1M403 132h1M439 132h1M39 133h1M75 133h1M87 133h1M110 133h1M368 133h1M391 133h1M403 133h1M439 133h1M38 134h1M74 134h1M86 134h1M109 134h1M369 134h1M392 134h1M404 134h1M440 134h1M38 135h1M73 135h1M85 135h1M109 135h1M369 135h1M393 135h1M405 135h1M440 135h1M37 136h1M72 136h1M84 136h1M108 136h1M370 136h1M394 136h1M406 136h1M441 136h1M37 137h1M72 137h1M84 137h1M107 137h1M371 137h1M394 137h1M406 137h1M441 137h1M36 138h1M71 138h1M83 138h1M106 138h1M372 138h1M395 138h1M407 138h1M442 138h1M36 139h1M70 139h1M82 139h1M106 139h1M372 139h1M396 139h1M408 139h1M442 139h1M35 140h1M70 140h1M82 140h1M105 140h1M373 140h1M396 140h1M408 140h1M443 140h1M35 141h1M69 141h1M81 141h1M104 141h1M374 141h1M397 141h1M409 141h1M443 141h1M34 142h1M68 142h1M80 142h1M103 142h1M375 142h1M398 142h1M410 142h1M444 142h1M34 143h1M68 143h1M80 143h1M103 143h1M375 143h1M398 143h1M410 143h1M444 143h1M33 144h1M67 144h1M79 144h1M102 144h1M376 144h1M399 144h1M411 144h1M445 144h1M33 145h1M67 145h1M79 145h1M102 145h1M376 145h1M399 145h1M411 145h1M445 145h1M32 146h1M66 146h1M78 146h1M101 146h1M377 146h1M400 146h1M412 146h1M446 146h1M32 147h1M66 147h1M77 147h1M100 147h1M378 147h1M401 147h1M412 147h1M446 147h1M32 148h1M65 148h1M77 148h1M99 148h1M379 148h1M401 148h1M413 148h1M446 148h1M31 149h1M65 149h1M76 149h1M99 149h1M379 149h1M402 149h1M413 149h1M447 149h1M31 150h1M64 150h1M76 150h1M98 150h1M380 150h1M402 150h1M414 150h1M447 150h1M30 151h1M64 151h1M75 151h1M97 151h1M381 151h1M403 151h1M414 151h1M448 151h1M30 152h1M63 152h1M75 152h1M96 152h1M382 152h1M403 152h1M415 152h1M448 152h1M29 153h1M63 153h1M74 153h1M96 153h1M382 153h1M404 153h1M415 153h1M449 153h1M29 154h1M63 154h1M74 154h1M95 154h1M383 154h1M404 154h1M415 154h1M449 154h1M29 155h1M62 155h1M73 155h1M95 155h1M383 155h1M405 155h1M416 155h1M449 155h1M28 156h1M62 156h1M73 156h1M94 156h1M384 156h1M405 156h1M416 156h1M450 156h1M28 157h1M61 157h1M72 157h1M94 157h1M384 157h1M406 157h1M417 157h1M450 157h1M27 158h1M61 158h1M72 158h1M93 158h1M385 158h1M406 158h1M417 158h1M451 158h1M27 159h1M60 159h1M71 159h1M93 159h1M385 159h1M407 159h1M418 159h1M451 159h1M27 160h1M60 160h1M71 160h1M92 160h1M386 160h1M407 160h1M418 160h1M451 160h1M26 161h1M59 161h1M70 161h1M92 161h1M386 161h1M408 161h1M419 161h1M452 161h1M26 162h1M59 162h1M70 162h1M91 162h1M387 162h1M408 162h1M419 162h1M452 162h1M26 163h1M58 163h1M69 163h1M91 163h1M387 163h1M409 163h1M420 163h1M452 163h1M25 164h1M58 164h1M69 164h1M90 164h1M388 164h1M409 164h1M420 164h1M453 164h1M25 165h1M57 165h1M69 165h1M90 165h1M388 165h1M409 165h1M421 165h1M453 165h1M24 166h1M57 166h1M68 166h1M89 166h1M389 166h1M410 166h1M421 166h1M454 166h1M24 167h1M57 167h1M68 167h1M88 167h1M390 167h1M410 167h1M421 167h1M454 167h1M23 168h1M56 168h1M68 168h1M88 168h1M390 168h1M410 168h1M422 168h1M455 168h1M23 169h1M56 169h1M67 169h1M87 169h1M391 169h1M411 169h1M422 169h1M455 169h1M23 170h1M56 170h1M67 170h1M87 170h1M391 170h1M411 170h1M422 170h1M455 170h1M22 171h1M55 171h1M66 171h1M86 171h1M392 171h1M412 171h1M423 171h1M456 171h1M22 172h1M55 172h1M66 172h1M86 172h1M392 172h1M412 172h1M423 172h1M456 172h1M22 173h1M55 173h1M65 173h1M85 173h1M393 173h1M413 173h1M423 173h1M456 173h1M22 174h1M54 174h1M65 174h1M85 174h1M393 174h1M413 174h1M424 174h1M456 174h1M21 175h1M54 175h1M64 175h1M85 175h1M393 175h1M414 175h1M424 175h1M457 175h1M21 176h1M54 176h1M64 176h1M84 176h1M394 176h1M414 176h1M424 176h1M457 176h1M21 177h1M54 177h1M64 177h1M84 177h1M394 177h1M414 177h1M424 177h1M457 177h1M21 178h1M53 178h1M63 178h1M84 178h1M394 178h1M415 178h1M425 178h1M457 178h1M20 179h1M53 179h1M63 179h1M83 179h1M395 179h1M415 179h1M425 179h1M458 179h1M20 180h1M53 180h1M63 180h1M83 180h1M395 180h1M415 180h1M425 180h1M458 180h1M20 181h1M52 181h1M62 181h1M82 181h1M396 181h1M416 181h1M426 181h1M458 181h1M20 182h1M52 182h1M62 182h1M82 182h1M396 182h1M416 182h1M426 182h1M458 182h1M19 183h1M52 183h1M62 183h1M82 183h1M396 183h1M416 183h1M426 183h1M459 183h1M19 184h1M51 184h1M61 184h1M81 184h1M397 184h1M417 184h1M427 184h1M459 184h1M19 185h1M51 185h1M61 185h1M81 185h1M397 185h1M417 185h1M427 185h1M459 185h1M18 186h1M51 186h1M61 186h1M81 186h1M397 186h1M417 186h1M427 186h1M460 186h1M18 187h1M50 187h1M60 187h1M80 187h1M398 187h1M418 187h1M428 187h1M460 187h1M18 188h1M50 188h1M60 188h1M80 188h1M398 188h1M418 188h1M428 188h1M460 188h1M18 189h1M50 189h1M60 189h1M80 189h1M398 189h1M418 189h1M428 189h1M460 189h1M17 190h1M50 190h1M60 190h1M79 190h1M399 190h1M418 190h1M428 190h1M461 190h1M17 191h1M49 191h1M59 191h1M79 191h1M399 191h1M419 191h1M429 191h1M461 191h1M17 192h1M49 192h1M59 192h1M78 192h1M400 192h1M419 192h1M429 192h1M461 192h1M17 193h1M49 193h1M59 193h1M78 193h1M400 193h1M419 193h1M429 193h1M461 193h1M16 194h1M48 194h1M59 194h1M78 194h1M400 194h1M419 194h1M430 194h1M462 194h1M16 195h1M48 195h1M59 195h1M78 195h1M400 195h1M419 195h1M430 195h1M462 195h1M16 196h1M48 196h1M58 196h1M77 196h1M401 196h1M420 196h1M430 196h1M462 196h1M16 197h1M48 197h1M58 197h1M77 197h1M401 197h1M420 197h1M430 197h1M462 197h1M15 198h1M47 198h1M58 198h1M77 198h1M401 198h1M420 198h1M431 198h1M463 198h1M15 199h1M47 199h1M58 199h1M77 199h1M401 199h1M420 199h1M431 199h1M463 199h1M15 200h1M47 200h1M57 200h1M77 200h1M401 200h1M421 200h1M431 200h1M463 200h1M15 201h1M47 201h1M57 201h1M77 201h1M401 201h1M421 201h1M431 201h1M463 201h1M15 202h1M46 202h1M57 202h1M76 202h1M402 202h1M421 202h1M432 202h1M463 202h1M15 203h1M46 203h1M57 203h1M76 203h1M402 203h1M421 203h1M432 203h1M463 203h1M14 204h1M46 204h1M56 204h1M76 204h1M402 204h1M422 204h1M432 204h1M464 204h1M14 205h1M46 205h1M56 205h1M76 205h1M402 205h1M422 205h1M432 205h1M464 205h1M14 206h1M46 206h1M56 206h1M76 206h1M402 206h1M422 206h1M432 206h1M464 206h1M14 207h1M46 207h1M56 207h1M76 207h1M402 207h1M422 207h1M432 207h1M464 207h1M14 208h1M46 208h1M56 208h1M75 208h1M403 208h1M422 208h1M432 208h1M464 208h1M14 209h1M45 209h1M56 209h1M75 209h1M403 209h1M422 209h1M433 209h1M464 209h1M14 210h1M45 210h1M56 210h1M75 210h1M403 210h1M422 210h1M433 210h1M464 210h1M14 211h1M45 211h1M55 211h1M75 211h1M403 211h1M423 211h1M433 211h1M464 211h1M13 212h1M45 212h1M55 212h1M75 212h1M403 212h1M423 212h1M433 212h1M465 212h1M13 213h1M45 213h1M55 213h1M74 213h1M404 213h1M423 213h1M433 213h1M465 213h1M13 214h1M45 214h1M55 214h1M74 214h1M404 214h1M423 214h1M433 214h1M465 214h1M13 215h1M45 215h1M55 215h1M74 215h1M404 215h1M423 215h1M433 215h1M465 215h1M13 216h1M44 216h1M55 216h1M74 216h1M404 216h1M423 216h1M434 216h1M465 216h1M13 217h1M44 217h1M54 217h1M74 217h1M404 217h1M424 217h1M434 217h1M465 217h1M13 218h1M44 218h1M54 218h1M74 218h1M404 218h1M424 218h1M434 218h1M465 218h1M13 219h1M44 219h1M54 219h1M73 219h1M405 219h1M424 219h1M434 219h1M465 219h1M13 220h1M44 220h1M54 220h1M73 220h1M405 220h1M424 220h1M434 220h1M465 220h1M13 221h1M44 221h1M54 221h1M73 221h1M405 221h1M424 221h1M434 221h1M465 221h1M13 222h1M44 222h1M54 222h1M73 222h1M405 222h1M424 222h1M434 222h1M465 222h1M13 223h1M43 223h1M53 223h1M73 223h1M405 223h1M425 223h1M435 223h1M465 223h1M13 224h1M43 224h1M53 224h1M73 224h1M405 224h1M425 224h1M435 224h1M465 224h1M13 225h1M43 225h1M53 225h1M72 225h1M406 225h1M425 225h1M435 225h1M465 225h1M13 226h1M43 226h1M53 226h1M72 226h1M406 226h1M425 226h1M435 226h1M465 226h1M13 227h1M43 227h1M53 227h1M72 227h1M406 227h1M425 227h1M435 227h1M465 227h1M12 228h1M43 228h1M53 228h1M72 228h1M406 228h1M425 228h1M435 228h1M466 228h1M12 229h1M43 229h1M53 229h1M72 229h1M406 229h1M425 229h1M435 229h1M466 229h1M12 230h1M43 230h1M53 230h1M72 230h1M406 230h1M425 230h1M435 230h1M466 230h1M12 231h1M43 231h1M53 231h1M72 231h1M406 231h1M425 231h1M435 231h1M466 231h1M12 232h1M43 232h1M53 232h1M72 232h1M406 232h1M425 232h1M435 232h1M466 232h1M12 233h1M43 233h1M53 233h1M72 233h1M406 233h1M425 233h1M435 233h1M466 233h1M12 234h1M43 234h1M53 234h1M72 234h1M406 234h1M425 234h1M435 234h1M466 234h1M12 235h1M43 235h1M53 235h1M72 235h1M406 235h1M425 235h1M435 235h1M466 235h1M12 236h1M43 236h1M53 236h1M72 236h1M406 236h1M425 236h1M435 236h1M466 236h1M12 237h1M43 237h1M53 237h1M72 237h1M406 237h1M425 237h1M435 237h1M466 237h1M12 238h1M43 238h1M53 238h1M72 238h1M406 238h1M425 238h1M435 238h1M466 238h1M12 239h1M43 239h1M53 239h1M72 239h1M406 239h1M425 239h1M435 239h1M466 239h1M12 240h1M43 240h1M53 240h1M72 240h1M406 240h1M425 240h1M435 240h1M466 240h1M12 241h1M43 241h1M53 241h1M72 241h1M406 241h1M425 241h1M435 241h1M466 241h1M12 242h1M43 242h1M53 242h1M72 242h1M406 242h1M425 242h1M435 242h1M466 242h1M12 243h1M43 243h1M53 243h1M72 243h1M406 243h1M425 243h1M435 243h1M466 243h1M12 244h1M43 244h1M53 244h1M72 244h1M406 244h1M425 244h1M435 244h1M466 244h1M12 245h1M43 245h1M53 245h1M72 245h1M406 245h1M425 245h1M435 245h1M466 245h1M12 246h1M43 246h1M53 246h1M72 246h1M406 246h1M425 246h1M435 246h1M466 246h1M12 247h1M43 247h1M53 247h1M72 247h1M406 247h1M425 247h1M435 247h1M466 247h1M12 248h1M43 248h1M53 248h1M72 248h1M406 248h1M425 248h1M435 248h1M466 248h1M12 249h1M43 249h1M53 249h1M72 249h1M406 249h1M425 249h1M435 249h1M466 249h1M13 250h1M43 250h1M53 250h1M72 250h1M406 250h1M425 250h1M435 250h1M465 250h1M13 251h1M43 251h1M53 251h1M72 251h1M406 251h1M425 251h1M435 251h1M465 251h1M13 252h1M43 252h1M53 252h1M72 252h1M406 252h1M425 252h1M435 252h1M465 252h1M13 253h1M43 253h1M53 253h1M73 253h1M405 253h1M425 253h1M435 253h1M465 253h1M13 254h1M43 254h1M53 254h1M73 254h1M405 254h1M425 254h1M435 254h1M465 254h1M13 255h1M43 255h1M54 255h1M73 255h1M405 255h1M424 255h1M435 255h1M465 255h1M13 256h1M44 256h1M54 256h1M73 256h1M405 256h1M424 256h1M434 256h1M465 256h1M13 257h1M44 257h1M54 257h1M73 257h1M405 257h1M424 257h1M434 257h1M465 257h1M13 258h1M44 258h1M54 258h1M73 258h1M405 258h1M424 258h1M434 258h1M465 258h1M13 259h1M44 259h1M54 259h1M74 259h1M404 259h1M424 259h1M434 259h1M465 259h1M13 260h1M44 260h1M54 260h1M74 260h1M404 260h1M424 260h1M434 260h1M465 260h1M13 261h1M44 261h1M55 261h1M74 261h1M404 261h1M423 261h1M434 261h1M465 261h1M13 262h1M44 262h1M55 262h1M74 262h1M404 262h1M423 262h1M434 262h1M465 262h1M13 263h1M45 263h1M55 263h1M74 263h1M404 263h1M423 263h1M433 263h1M465 263h1M13 264h1M45 264h1M55 264h1M74 264h1M404 264h1M423 264h1M433 264h1M465 264h1M13 265h1M45 265h1M55 265h1M75 265h1M403 265h1M423 265h1M433 265h1M465 265h1M14 266h1M45 266h1M55 266h1M75 266h1M403 266h1M423 266h1M433 266h1M464 266h1M14 267h1M45 267h1M55 267h1M75 267h1M403 267h1M423 267h1M433 267h1M464 267h1M14 268h1M45 268h1M56 268h1M75 268h1M403 268h1M422 268h1M433 268h1M464 268h1M14 269h1M45 269h1M56 269h1M75 269h1M403 269h1M422 269h1M433 269h1M464 269h1M14 270h1M46 270h1M56 270h1M75 270h1M403 270h1M422 270h1M432 270h1M464 270h1M14 271h1M46 271h1M56 271h1M76 271h1M402 271h1M422 271h1M432 271h1M464 271h1M14 272h1M46 272h1M56 272h1M76 272h1M402 272h1M422 272h1M432 272h1M464 272h1M14 273h1M46 273h1M56 273h1M76 273h1M402 273h1M422 273h1M432 273h1M464 273h1M15 274h1M46 274h1M57 274h1M76 274h1M402 274h1M421 274h1M432 274h1M463 274h1M15 275h1M46 275h1M57 275h1M76 275h1M402 275h1M421 275h1M432 275h1M463 275h1M15 276h1M47 276h1M57 276h1M77 276h1M401 276h1M421 276h1M431 276h1M463 276h1M15 277h1M47 277h1M57 277h1M77 277h1M401 277h1M421 277h1M431 277h1M463 277h1M15 278h1M47 278h1M57 278h1M77 278h1M401 278h1M421 278h1M431 278h1M463 278h1M15 279h1M47 279h1M58 279h1M77 279h1M401 279h1M420 279h1M431 279h1M463 279h1M16 280h1M47 280h1M58 280h1M77 280h1M401 280h1M420 280h1M431 280h1M462 280h1M16 281h1M48 281h1M58 281h1M77 281h1M401 281h1M420 281h1M430 281h1M462 281h1M16 282h1M48 282h1M58 282h1M78 282h1M400 282h1M420 282h1M430 282h1M462 282h1M16 283h1M48 283h1M59 283h1M78 283h1M400 283h1M419 283h1M430 283h1M462 283h1M17 284h1M48 284h1M59 284h1M78 284h1M400 284h1M419 284h1M430 284h1M461 284h1M17 285h1M49 285h1M59 285h1M78 285h1M400 285h1M419 285h1M429 285h1M461 285h1M17 286h1M49 286h1M59 286h1M78 286h1M400 286h1M419 286h1M429 286h1M461 286h1M17 287h1M49 287h1M60 287h1M79 287h1M399 287h1M418 287h1M429 287h1M461 287h1M18 288h1M50 288h1M60 288h1M79 288h1M399 288h1M418 288h1M428 288h1M460 288h1M18 289h1M50 289h1M60 289h1M80 289h1M398 289h1M418 289h1M428 289h1M460 289h1M18 290h1M50 290h1M60 290h1M80 290h1M398 290h1M418 290h1M428 290h1M460 290h1M18 291h1M50 291h1M60 291h1M80 291h1M398 291h1M418 291h1M428 291h1M460 291h1M19 292h1M51 292h1M61 292h1M81 292h1M397 292h1M417 292h1M427 292h1M459 292h1M19 293h1M51 293h1M61 293h1M81 293h1M397 293h1M417 293h1M427 293h1M459 293h1M19 294h1M51 294h1M61 294h1M81 294h1M397 294h1M417 294h1M427 294h1M459 294h1M19 295h1M52 295h1M62 295h1M82 295h1M396 295h1M416 295h1M426 295h1M459 295h1M20 296h1M52 296h1M62 296h1M82 296h1M396 296h1M416 296h1M426 296h1M458 296h1M20 297h1M52 297h1M62 297h1M82 297h1M396 297h1M416 297h1M426 297h1M458 297h1M20 298h1M53 298h1M63 298h1M83 298h1M395 298h1M415 298h1M425 298h1M458 298h1M20 299h1M53 299h1M63 299h1M83 299h1M395 299h1M415 299h1M425 299h1M458 299h1M21 300h1M53 300h1M63 300h1M84 300h1M394 300h1M415 300h1M425 300h1M457 300h1M21 301h1M54 301h1M64 301h1M84 301h1M394 301h1M414 301h1M424 301h1M457 301h1M21 302h1M54 302h1M64 302h1M84 302h1M394 302h1M414 302h1M424 302h1M457 302h1M22 303h1M54 303h1M65 303h1M85 303h1M393 303h1M413 303h1M424 303h1M456 303h1M22 304h1M54 304h1M65 304h1M85 304h1M393 304h1M413 304h1M424 304h1M456 304h1M22 305h1M55 305h1M66 305h1M85 305h1M393 305h1M412 305h1M423 305h1M456 305h1M22 306h1M55 306h1M66 306h1M86 306h1M392 306h1M412 306h1M423 306h1M456 306h1M23 307h1M55 307h1M67 307h1M86 307h1M392 307h1M411 307h1M423 307h1M455 307h1M23 308h1M56 308h1M67 308h1M87 308h1M391 308h1M411 308h1M422 308h1M455 308h1M23 309h1M56 309h1M67 309h1M87 309h1M391 309h1M411 309h1M422 309h1M455 309h1M23 310h1M56 310h1M68 310h1M88 310h1M390 310h1M410 310h1M422 310h1M455 310h1M24 311h1M57 311h1M68 311h1M88 311h1M390 311h1M410 311h1M421 311h1M454 311h1M24 312h1M57 312h1M68 312h1M89 312h1M389 312h1M410 312h1M421 312h1M454 312h1M25 313h1M58 313h1M69 313h1M90 313h1M388 313h1M409 313h1M420 313h1M453 313h1M25 314h1M58 314h1M69 314h1M90 314h1M388 314h1M409 314h1M420 314h1M453 314h1M26 315h1M59 315h1M70 315h1M91 315h1M387 315h1M408 315h1M419 315h1M452 315h1M26 316h1M59 316h1M70 316h1M91 316h1M387 316h1M408 316h1M419 316h1M452 316h1M26 317h1M60 317h1M71 317h1M92 317h1M386 317h1M407 317h1M418 317h1M452 317h1M27 318h1M60 318h1M71 318h1M92 318h1M386 318h1M407 318h1M418 318h1M451 318h1M27 319h1M60 319h1M72 319h1M93 319h1M385 319h1M406 319h1M418 319h1M451 319h1M28 320h1M61 320h1M72 320h1M93 320h1M385 320h1M406 320h1M417 320h1M450 320h1M28 321h1M61 321h1M73 321h1M94 321h1M384 321h1M405 321h1M417 321h1M450 321h1M28 322h1M62 322h1M73 322h1M94 322h1M384 322h1M405 322h1M416 322h1M450 322h1M29 323h1M62 323h1M74 323h1M95 323h1M383 323h1M404 323h1M416 323h1M449 323h1M29 324h1M63 324h1M74 324h1M95 324h1M383 324h1M404 324h1M415 324h1M449 324h1M29 325h1M63 325h1M75 325h1M96 325h1M382 325h1M403 325h1M415 325h1M449 325h1M30 326h1M64 326h1M75 326h1M96 326h1M382 326h1M403 326h1M414 326h1M448 326h1M30 327h1M64 327h1M76 327h1M97 327h1M381 327h1M402 327h1M414 327h1M448 327h1M31 328h1M65 328h1M76 328h1M98 328h1M380 328h1M402 328h1M413 328h1M447 328h1M31 329h1M65 329h1M77 329h1M99 329h1M379 329h1M401 329h1M413 329h1M447 329h1M32 330h1M66 330h1M77 330h1M99 330h1M379 330h1M401 330h1M412 330h1M446 330h1M32 331h1M66 331h1M78 331h1M100 331h1M378 331h1M400 331h1M412 331h1M446 331h1M32 332h1M67 332h1M78 332h1M101 332h1M377 332h1M400 332h1M411 332h1M446 332h1M33 333h1M67 333h1M79 333h1M102 333h1M376 333h1M399 333h1M411 333h1M445 333h1M33 334h1M68 334h1M79 334h1M102 334h1M376 334h1M399 334h1M410 334h1M445 334h1M34 335h1M68 335h1M80 335h1M103 335h1M375 335h1M398 335h1M410 335h1M444 335h1M34 336h1M69 336h1M80 336h1M103 336h1M375 336h1M398 336h1M409 336h1M444 336h1M35 337h1M69 337h1M81 337h1M104 337h1M374 337h1M397 337h1M409 337h1M443 337h1M35 338h1M70 338h1M82 338h1M105 338h1M373 338h1M396 338h1M408 338h1M443 338h1M36 339h1M70 339h1M82 339h1M106 339h1M372 339h1M396 339h1M408 339h1M442 339h1M36 340h1M71 340h1M83 340h1M106 340h1M372 340h1M395 340h1M407 340h1M442 340h1M37 341h1M72 341h1M84 341h1M107 341h1M371 341h1M394 341h1M406 341h1M441 341h1M37 342h1M72 342h1M84 342h1M108 342h1M370 342h1M394 342h1M406 342h1M441 342h1M38 343h1M73 343h1M85 343h1M109 343h1M369 343h1M393 343h1M405 343h1M440 343h1M38 344h1M74 344h1M86 344h1M110 344h1M368 344h1M392 344h1M404 344h1M440 344h1M39 345h1M75 345h1M87 345h1M110 345h1M368 345h1M391 345h1M403 345h1M439 345h1M39 346h1M75 346h1M87 346h1M111 346h1M367 346h1M391 346h1M403 346h1M439 346h1M40 347h1M76 347h1M88 347h1M112 347h1M366 347h1M390 347h1M402 347h1M438 347h1M40 348h1M77 348h1M89 348h1M113 348h1M365 348h1M389 348h1M401 348h1M438 348h1M41 349h1M78 349h1M90 349h1M113 349h1M365 349h1M388 349h1M400 349h1M437 349h1M41 350h1M78 350h1M91 350h1M114 350h1M364 350h1M387 350h1M400 350h1M437 350h1M42 351h1M79 351h1M91 351h1M115 351h1M363 351h1M387 351h1M399 351h1M436 351h1M42 352h1M80 352h1M92 352h1M116 352h1M362 352h1M386 352h1M398 352h1M436 352h1M43 353h1M80 353h1M93 353h1M117 353h1M361 353h1M385 353h1M398 353h1M435 353h1M43 354h1M81 354h1M94 354h1M118 354h1M360 354h1M384 354h1M397 354h1M435 354h1M44 355h1M82 355h1M95 355h1M119 355h1M359 355h1M383 355h1M396 355h1M434 355h1M45 356h1M83 356h1M95 356h1M120 356h1M358 356h1M383 356h1M395 356h1M433 356h1M46 357h1M83 357h1M96 357h1M121 357h1M357 357h1M382 357h1M395 357h1M432 357h1M46 358h1M84 358h1M97 358h1M122 358h1M356 358h1M381 358h1M394 358h1M432 358h1M47 359h1M85 359h1M98 359h1M123 359h1M355 359h1M380 359h1M393 359h1M431 359h1M48 360h1M86 360h1M99 360h1M124 360h1M354 360h1M379 360h1M392 360h1M430 360h1M48 361h1M86 361h1M99 361h1M125 361h1M353 361h1M379 361h1M392 361h1M430 361h1M49 362h1M87 362h1M100 362h1M126 362h1M352 362h1M378 362h1M391 362h1M429 362h1M49 363h1M88 363h1M101 363h1M127 363h1M351 363h1M377 363h1M390 363h1M429 363h1M50 364h1M88 364h1M102 364h1M128 364h1M350 364h1M376 364h1M390 364h1M428 364h1M50 365h1M89 365h1M103 365h1M129 365h2M348 365h2M375 365h1M389 365h1M428 365h1M51 366h1M90 366h1M103 366h1M131 366h1M347 366h1M375 366h1M388 366h1M427 366h1M52 367h1M91 367h1M104 367h1M132 367h1M346 367h1M374 367h1M387 367h1M426 367h1M52 368h1M91 368h1M105 368h1M133 368h1M344 368h2M373 368h1M387 368h1M426 368h1M53 369h1M92 369h1M106 369h1M134 369h2M343 369h1M372 369h1M386 369h1M425 369h1M54 370h1M93 370h1M107 370h1M136 370h1M342 370h1M371 370h1M385 370h1M424 370h1M54 371h1M94 371h1M108 371h1M137 371h1M341 371h1M370 371h1M384 371h1M424 371h1M55 372h1M95 372h1M109 372h1M138 372h2M339 372h2M369 372h1M383 372h1M423 372h1M56 373h1M96 373h1M110 373h1M140 373h1M338 373h1M368 373h1M382 373h1M422 373h1M56 374h1M97 374h1M111 374h1M141 374h1M337 374h1M367 374h1M381 374h1M422 374h1M57 375h1M98 375h1M112 375h2M142 375h2M335 375h2M365 375h2M380 375h1M421 375h1M58 376h1M99 376h1M114 376h1M144 376h2M333 376h2M364 376h1M379 376h1M420 376h1M59 377h1M100 377h1M115 377h1M146 377h1M332 377h1M363 377h1M378 377h1M419 377h1M59 378h1M101 378h1M116 378h1M147 378h1M331 378h1M362 378h1M377 378h1M419 378h1M60 379h1M102 379h1M117 379h2M148 379h2M329 379h2M360 379h2M376 379h1M418 379h1M61 380h1M103 380h1M119 380h1M150 380h1M328 380h1M359 380h1M375 380h1M417 380h1M62 381h1M104 381h1M120 381h1M151 381h1M327 381h1M358 381h1M374 381h1M416 381h1M63 382h1M105 382h1M121 382h1M152 382h2M325 382h2M357 382h1M373 382h1M415 382h1M63 383h1M106 383h1M122 383h2M154 383h2M323 383h2M355 383h2M372 383h1M415 383h1M64 384h1M107 384h1M124 384h1M156 384h2M321 384h2M354 384h1M371 384h1M414 384h1M65 385h1M108 385h1M125 385h1M158 385h2M319 385h2M353 385h1M370 385h1M413 385h1M66 386h1M109 386h1M126 386h1M160 386h2M317 386h2M352 386h1M369 386h1M412 386h1M67 387h1M110 387h2M127 387h2M162 387h2M315 387h2M350 387h2M367 387h2M411 387h1M68 388h1M112 388h1M129 388h1M164 388h2M313 388h2M349 388h1M366 388h1M410 388h1M68 389h1M113 389h1M130 389h1M166 389h1M312 389h1M348 389h1M365 389h1M410 389h1M69 390h1M114 390h2M131 390h1M167 390h2M310 390h2M347 390h1M363 390h2M409 390h1M70 391h1M116 391h1M132 391h2M169 391h2M308 391h2M345 391h2M362 391h1M408 391h1M71 392h1M117 392h2M134 392h1M171 392h2M306 392h2M344 392h1M360 392h2M407 392h1M72 393h1M119 393h1M135 393h1M173 393h3M303 393h3M343 393h1M359 393h1M406 393h1M73 394h1M120 394h1M136 394h2M176 394h3M300 394h3M341 394h2M358 394h1M405 394h1M74 395h1M121 395h2M138 395h1M179 395h2M298 395h2M340 395h1M356 395h2M404 395h1M75 396h1M123 396h1M139 396h2M181 396h3M295 396h3M338 396h2M355 396h1M403 396h1M76 397h1M124 397h1M141 397h1M184 397h3M292 397h3M337 397h1M354 397h1M402 397h1M77 398h1M125 398h2M142 398h2M187 398h3M289 398h3M335 398h2M352 398h2M401 398h1M78 399h1M127 399h1M144 399h2M190 399h2M287 399h2M333 399h2M351 399h1M400 399h1M79 400h1M128 400h2M146 400h1M192 400h4M282 400h5M331 400h2M349 400h2M399 400h1M80 401h1M130 401h1M147 401h2M196 401h6M276 401h6M329 401h2M348 401h1M398 401h1M81 402h1M131 402h1M149 402h2M202 402h6M271 402h5M327 402h2M347 402h1M397 402h1M82 403h1M132 403h2M151 403h2M208 403h5M265 403h6M325 403h2M345 403h2M396 403h1M83 404h1M134 404h1M153 404h2M213 404h6M259 404h6M323 404h2M344 404h1M395 404h1M84 405h1M135 405h1M155 405h2M219 405h6M253 405h6M321 405h2M343 405h1M394 405h1M85 406h1M136 406h2M157 406h2M225 406h28M319 406h2M341 406h2M393 406h1M86 407h1M138 407h1M159 407h2M317 407h2M340 407h1M392 407h1M87 408h1M139 408h2M161 408h2M315 408h2M338 408h2M391 408h1M88 409h1M141 409h1M163 409h3M313 409h2M336 409h2M390 409h1M89 410h1M142 410h2M166 410h3M310 410h3M334 410h2M388 410h2M90 411h2M144 411h2M169 411h2M307 411h3M332 411h2M387 411h1M92 412h1M146 412h2M171 412h2M305 412h2M330 412h2M386 412h1M93 413h1M148 413h2M173 413h2M303 413h2M328 413h2M385 413h1M94 414h1M150 414h2M175 414h3M301 414h2M326 414h2M384 414h1M95 415h1M152 415h3M178 415h3M298 415h3M324 415h2M382 415h2M96 416h2M155 416h2M181 416h3M295 416h3M322 416h2M381 416h1M98 417h1M157 417h2M184 417h3M292 417h3M320 417h2M380 417h1M99 418h1M159 418h2M187 418h4M287 418h5M317 418h3M379 418h1M100 419h2M161 419h2M191 419h5M283 419h4M315 419h2M377 419h2M102 420h1M163 420h2M196 420h4M279 420h4M313 420h2M376 420h1M103 421h1M165 421h3M200 421h4M274 421h5M311 421h2M375 421h1M104 422h2M168 422h3M204 422h7M268 422h6M308 422h3M373 422h2M106 423h1M171 423h3M211 423h6M261 423h7M305 423h3M372 423h1M107 424h2M174 424h4M217 424h6M255 424h6M301 424h4M370 424h2M109 425h1M178 425h3M223 425h32M298 425h3M369 425h1M110 426h2M181 426h3M295 426h3M367 426h2M112 427h1M184 427h3M292 427h3M366 427h1M113 428h2M187 428h4M288 428h4M364 428h2M115 429h2M191 429h3M285 429h3M362 429h2M117 430h2M194 430h4M281 430h4M360 430h2M119 431h1M198 431h4M276 431h5M359 431h1M120 432h2M202 432h7M270 432h6M357 432h2M122 433h1M209 433h7M263 433h7M356 433h1M123 434h1M216 434h7M256 434h7M355 434h1M124 435h2M223 435h33M353 435h2M126 436h2M351 436h2M128 437h2M349 437h2M130 438h2M347 438h2M132 439h2M345 439h2M134 440h2M343 440h2M136 441h2M341 441h2M138 442h2M339 442h2M140 443h2M337 443h2M142 444h2M335 444h2M144 445h2M333 445h2M146 446h3M330 446h3M149 447h2M328 447h2M151 448h2M326 448h2M153 449h3M323 449h3M156 450h2M320 450h3M158 451h3M318 451h2M161 452h3M315 452h3M164 453h2M313 453h2M166 454h2M311 454h2M168 455h3M307 455h4M171 456h4M303 456h4M175 457h4M300 457h3M179 458h4M296 458h4M183 459h3M292 459h4M186 460h4M288 460h4M190 461h4M284 461h4M194 462h4M280 462h4M198 463h6M274 463h6M204 464h8M266 464h8M212 465h16M250 465h16M228 466h22" stroke="#fff"/>
</g>
<g id="cusps">
<path d="M237 13h1M237 14h1M237 15h1M237 16h1M237 17h1M237 18h1M237 19h1M237 20h1M237 21h1M237 22h1M237 23h1M237 24h1M237 25h1M237 26h1M237 27h1M237 28h1M237 29h1M237 30h1M237 31h1M237 32h1M237 33h1M237 34h1M237 35h1M237 36h1M237 37h1M237 38h1M237 39h1M237 40h1M237 41h1M237 42h1M350 42h1M349 43h1M124 44h1M349 44h1M125 45h1M348 45h1M125 46h1M348 46h1M126 47h1M347 47h1M126 48h1M347 48h1M127 49h1M346 49h1M127 50h1M345 50h1M128 51h1M345 51h1M129 52h1M344 52h1M129 53h1M344 53h1M130 54h1M343 54h1M130 55h1M342 55h1M131 56h1M342 56h1M132 57h1M201 57h1M341 57h1M132 58h1M201 58h1M341 58h1M133 59h1M201 59h1M340 59h1M133 60h1M202 60h1M340 60h1M134 61h1M202 61h1M339 61h1M134 62h1M202 62h1M338 62h1M135 63h1M202 63h1M338 63h1M136 64h1M202 64h1M337 64h1M136 65h1M202 65h1M337 65h1M137 66h1M203 66h1M336 66h1M137 67h1M203 67h1M308 67h1M336 67h1M138 68h1M203 68h1M308 68h1M335 68h1M138 69h1M203 69h1M307 69h1M139 70h1M203 70h1M307 70h1M203 71h1M306 71h1M204 72h1M306 72h1M204 73h1M305 73h1M204 74h1M305 74h1M204 75h1M304 75h1M304 76h1M304 77h1M303 78h1M303 79h1M302 80h1M302 81h1M301 82h1M301 83h1M376 114h1M375 115h1M374 116h1M373 117h1M372 118h1M371 119h1M369 120h2M368 121h1M367 122h1M366 123h1M365 124h1M434 124h1M364 125h1M432 125h2M92 126h1M363 126h1M430 126h2M93 127h1M428 127h2M42 128h1M94 128h2M427 128h1M43 129h2M96 129h1M425 129h2M45 130h2M97 130h1M423 130h2M47 131h2M98 131h1M421 131h2M49 132h1M99 132h2M420 132h1M50 133h2M101 133h1M418 133h2M52 134h2M102 134h1M416 134h2M54 135h1M103 135h2M415 135h1M55 136h2M105 136h1M413 136h2M57 137h2M106 137h1M411 137h2M59 138h2M409 138h2M61 139h1M408 139h1M62 140h2M64 141h2M66 142h2M68 143h1M412 174h2M409 175h3M406 176h3M404 177h2M401 178h3M398 179h3M396 180h2M436 237h30M53 239h19M407 239h19M13 241h30M81 298h2M78 299h3M75 300h3M73 301h2M70 302h3M67 303h3M65 304h2M410 335h1M411 336h2M413 337h2M415 338h2M70 339h1M417 339h1M68 340h2M418 340h2M66 341h2M372 341h1M420 341h2M64 342h2M373 342h1M422 342h1M63 343h1M374 343h2M423 343h2M61 344h2M376 344h1M425 344h2M59 345h2M377 345h1M427 345h2M57 346h2M378 346h1M429 346h1M56 347h1M379 347h2M430 347h2M54 348h2M381 348h1M432 348h2M52 349h2M382 349h1M434 349h2M51 350h1M383 350h2M436 350h1M49 351h2M385 351h1M47 352h2M115 352h1M386 352h1M45 353h2M114 353h1M44 354h1M113 354h1M112 355h1M111 356h1M110 357h1M108 358h2M107 359h1M106 360h1M105 361h1M104 362h1M103 363h1M102 364h1M177 395h1M177 396h1M176 397h1M176 398h1M175 399h1M175 400h1M174 401h1M174 402h1M173 403h1M274 403h1M173 404h1M274 404h1M173 405h1M274 405h1M172 406h1M275 406h1M172 407h1M275 407h1M171 408h1M275 408h1M339 408h1M171 409h1M275 409h1M340 409h1M143 410h1M170 410h1M275 410h1M340 410h1M142 411h1M170 411h1M275 411h1M341 411h1M142 412h1M276 412h1M341 412h1M141 413h1M276 413h1M342 413h1M141 414h1M276 414h1M342 414h1M140 415h1M276 415h1M343 415h1M140 416h1M276 416h1M344 416h1M139 417h1M276 417h1M344 417h1M138 418h1M277 418h1M345 418h1M138 419h1M277 419h1M345 419h1M137 420h1M277 420h1M346 420h1M137 421h1M277 421h1M347 421h1M136 422h1M347 422h1M135 423h1M348 423h1M135 424h1M348 424h1M134 425h1M349 425h1M134 426h1M349 426h1M133 427h1M350 427h1M133 428h1M351 428h1M132 429h1M351 429h1M131 430h1M352 430h1M131 431h1M352 431h1M130 432h1M353 432h1M130 433h1M353 433h1M129 434h1M354 434h1M129 435h1M128 436h1M241 436h1M241 437h1M241 438h1M241 439h1M241 440h1M241 441h1M241 442h1M241 443h1M241 444h1M241 445h1M241 446h1M241 447h1M241 448h1M241 449h1M241 450h1M241 451h1M241 452h1M241 453h1M241 454h1M241 455h1M241 456h1M241 457h1M241 458h1M241 459h1M241 460h1M241 461h1M241 462h1M241 463h1M241 464h1M241 465h1" stroke="#fff"/>
<path d="M205 77h1M206 79h1M206 81h1M206 83h1M207 85h1M207 87h1M208 89h1M208 91h1M209 93h1M209 95h1M209 97h1M210 99h1M210 101h1M211 103h1M211 105h1M211 107h1M212 109h1M212 111h1M213 113h1M213 115h1M214 117h1M214 119h1M214 121h1M215 123h1M215 125h1M216 127h1M361 128h1M216 129h1M359 130h1M216 131h1M357 132h1M217 133h1M355 133h1M217 135h1M353 135h1M218 137h1M351 137h1M107 138h1M218 139h1M349 139h1M109 140h1M111 141h1M219 141h1M347 141h1M345 142h1M113 143h1M219 143h1M115 144h1M343 144h1M219 145h1M117 146h1M341 146h1M119 147h1M220 147h1M339 148h1M121 149h1M220 149h1M123 150h1M337 150h1M221 151h1M125 152h1M335 152h1M127 153h1M221 153h1M333 153h1M129 155h1M221 155h1M331 155h1M131 156h1M222 157h1M329 157h1M133 158h1M135 159h1M222 159h1M327 159h1M137 161h1M223 161h1M325 161h1M139 162h1M223 163h1M323 163h1M141 164h1M321 164h1M224 165h1M143 166h1M319 166h1M145 167h1M224 167h1M317 168h1M147 169h1M224 169h1M149 170h1M315 170h1M225 171h1M151 172h1M313 172h1M153 173h1M225 173h1M311 173h1M155 175h1M226 175h1M309 175h1M157 176h1M226 177h1M307 177h1M159 178h1M161 179h1M226 179h1M305 179h1M163 181h1M227 181h1M303 181h1M395 181h1M165 182h1M391 182h1M393 182h1M227 183h1M301 183h1M389 183h1M167 184h1M299 184h1M387 184h1M169 185h1M228 185h1M383 185h1M385 185h1M297 186h1M381 186h1M171 187h1M228 187h1M379 187h1M295 188h1M375 188h1M377 188h1M173 189h1M229 189h1M373 189h1M175 190h1M293 190h1M371 190h1M229 191h1M367 191h1M369 191h1M177 192h1M291 192h1M365 192h1M179 193h1M229 193h1M289 193h1M363 193h1M359 194h1M361 194h1M181 195h1M230 195h1M287 195h1M357 195h1M183 196h1M355 196h1M230 197h1M285 197h1M351 197h1M353 197h1M185 198h1M349 198h1M187 199h1M231 199h1M283 199h1M347 199h1M343 200h1M345 200h1M189 201h1M231 201h1M281 201h1M341 201h1M191 202h1M339 202h1M231 203h1M279 203h1M335 203h1M337 203h1M193 204h1M277 204h1M333 204h1M195 205h1M232 205h1M331 205h1M275 206h1M327 206h1M329 206h1M197 207h1M232 207h1M325 207h1M199 208h1M273 208h1M323 208h1M233 209h1M319 209h1M321 209h1M201 210h1M271 210h1M317 210h1M203 211h1M233 211h1M313 211h1M315 211h1M269 212h1M311 212h1M205 213h1M234 213h1M309 213h1M267 214h1M305 214h1M307 214h1M207 215h1M234 215h1M265 215h1M303 215h1M209 216h1M301 216h1M234 217h1M263 217h1M297 217h1M299 217h1M211 218h1M295 218h1M213 219h1M235 219h1M261 219h1M293 219h1M289 220h1M291 220h1M215 221h1M235 221h1M259 221h1M287 221h1M217 222h1M285 222h1M236 223h1M257 223h1M281 223h1M283 223h1M219 224h1M255 224h1M279 224h1M221 225h1M236 225h1M277 225h1M253 226h1M273 226h1M275 226h1M223 227h1M236 227h1M271 227h1M225 228h1M251 228h1M269 228h1M237 229h1M265 229h1M267 229h1M227 230h1M249 230h1M263 230h1M229 231h1M237 231h1M261 231h1M247 232h1M257 232h1M259 232h1M231 233h1M238 233h1M255 233h1M233 234h1M245 234h1M253 234h1M238 235h1M243 235h1M249 235h1M251 235h1M235 236h1M247 236h1M237 237h1M239 237h1M241 237h1M245 237h1M241 238h1M243 238h1M239 239h1M235 240h1M237 240h1M233 241h1M237 241h1M239 241h1M241 241h1M231 242h1M243 242h1M227 243h1M229 243h1M235 243h1M240 243h1M225 244h1M233 244h1M245 244h1M223 245h1M240 245h1M247 245h1M219 246h1M221 246h1M231 246h1M217 247h1M241 247h1M249 247h1M215 248h1M229 248h1M251 248h1M211 249h1M213 249h1M241 249h1M209 250h1M227 250h1M253 250h1M207 251h1M242 251h1M255 251h1M203 252h1M205 252h1M225 252h1M201 253h1M242 253h1M257 253h1M199 254h1M223 254h1M259 254h1M195 255h1M197 255h1M221 255h1M242 255h1M193 256h1M261 256h1M191 257h1M219 257h1M243 257h1M263 257h1M187 258h1M189 258h1M185 259h1M217 259h1M243 259h1M265 259h1M183 260h1M267 260h1M179 261h1M181 261h1M215 261h1M244 261h1M177 262h1M269 262h1M175 263h1M213 263h1M244 263h1M271 263h1M171 264h1M173 264h1M211 264h1M169 265h1M244 265h1M273 265h1M167 266h1M209 266h1M163 267h1M165 267h1M245 267h1M275 267h1M161 268h1M207 268h1M277 268h1M157 269h1M159 269h1M245 269h1M155 270h1M205 270h1M279 270h1M153 271h1M246 271h1M281 271h1M149 272h1M151 272h1M203 272h1M147 273h1M246 273h1M283 273h1M145 274h1M201 274h1M285 274h1M141 275h1M143 275h1M199 275h1M247 275h1M139 276h1M287 276h1M137 277h1M197 277h1M247 277h1M289 277h1M133 278h1M135 278h1M131 279h1M195 279h1M247 279h1M291 279h1M129 280h1M293 280h1M125 281h1M127 281h1M193 281h1M248 281h1M123 282h1M295 282h1M121 283h1M191 283h1M248 283h1M297 283h1M117 284h1M119 284h1M115 285h1M189 285h1M249 285h1M299 285h1M113 286h1M187 286h1M301 286h1M109 287h1M111 287h1M249 287h1M107 288h1M185 288h1M303 288h1M105 289h1M249 289h1M101 290h1M103 290h1M183 290h1M305 290h1M99 291h1M250 291h1M307 291h1M97 292h1M181 292h1M93 293h1M95 293h1M250 293h1M309 293h1M91 294h1M179 294h1M311 294h1M89 295h1M177 295h1M251 295h1M85 296h1M87 296h1M313 296h1M83 297h1M175 297h1M251 297h1M315 297h1M173 299h1M252 299h1M317 299h1M319 300h1M171 301h1M252 301h1M321 302h1M169 303h1M252 303h1M323 303h1M167 305h1M253 305h1M325 305h1M165 306h1M327 306h1M253 307h1M163 308h1M329 308h1M254 309h1M331 309h1M161 310h1M254 311h1M333 311h1M159 312h1M335 312h1M254 313h1M157 314h1M337 314h1M155 315h1M255 315h1M339 316h1M153 317h1M255 317h1M341 317h1M151 319h1M256 319h1M343 319h1M345 320h1M149 321h1M256 321h1M347 322h1M147 323h1M257 323h1M349 323h1M145 325h1M257 325h1M351 325h1M143 326h1M353 326h1M257 327h1M141 328h1M355 328h1M258 329h1M357 329h1M139 330h1M258 331h1M359 331h1M137 332h1M361 332h1M259 333h1M135 334h1M363 334h1M259 335h1M365 335h1M133 336h1M131 337h1M259 337h1M367 337h1M369 338h1M129 339h1M260 339h1M371 340h1M127 341h1M260 341h1M125 343h1M261 343h1M123 345h1M261 345h1M121 346h1M262 347h1M119 348h1M262 349h1M117 350h1M262 351h1M263 353h1M263 355h1M264 357h1M264 359h1M264 361h1M265 363h1M265 365h1M266 367h1M266 369h1M267 371h1M267 373h1M267 375h1M268 377h1M268 379h1M269 381h1M269 383h1M269 385h1M270 387h1M270 389h1M271 391h1M271 393h1M272 395h1M272 397h1M272 399h1M273 401h1" stroke="#808080"/>
</g>
<g id="signs">
<use href="#s1x2" x="182" y="35" stroke="#f00"/>
<use href="#o5x1" x="210" y="29" stroke="#f00"/>
<use href="#o5x1" x="62" y="255" stroke="#f00"/>
<use href="#s2x2" x="87" y="91" stroke="#ff0"/>
<use href="#o4x1" x="108" y="72" stroke="#ff0"/>
<use href="#o4x1" x="80" y="317" stroke="#ff0"/>
<use href="#s3x2" x="33" y="187" stroke="#0f0"/>
<use href="#o3x1" x="42" y="160" stroke="#0f0"/>
<use href="#o3x1" x="122" y="372" stroke="#0f0"/>
<use href="#s4x2" x="35" y="296" stroke="#00f"/>
<use href="#o2x1" x="29" y="268" stroke="#00f"/>
<use href="#o2x1" x="199" y="412" stroke="#00f"/>
<use href="#s5x2" x="91" y="391" stroke="#f00"/>
<use href="#o1x1" x="72" y="370" stroke="#f00"/>
<use href="#o1x1" x="305" y="403" stroke="#f00"/>
<use href="#s6x2" x="187" y="445" stroke="#ff0"/>
<use href="#o3x1" x="160" y="436" stroke="#0f0"/>
<use href="#o3x1" x="395" y="323" stroke="#0f0"/>
<use href="#s7x2" x="296" y="443" stroke="#0f0"/>
<use href="#o4x1" x="268" y="449" stroke="#ff0"/>
<use href="#o4x1" x="416" y="223" stroke="#ff0"/>
<use href="#s8x2" x="391" y="387" stroke="#00f"/>
<use href="#o10x1" x="370" y="406" stroke="#00f"/>
<use href="#o10x1" x="398" y="161" stroke="#00f"/>
<use href="#s9x2" x="445" y="291" stroke="#f00"/>
<use href="#o6x1" x="436" y="318" stroke="#f00"/>
<use href="#o6x1" x="356" y="106" stroke="#f00"/>
<use href="#s10x2" x="443" y="182" stroke="#ff0"/>
<use href="#o7x1" x="449" y="210" stroke="#ff0"/>
<use href="#o7x1" x="279" y="66" stroke="#ff0"/>
<use href="#s11x2" x="387" y="87" stroke="#0f0"/>
<use href="#o8x1" x="406" y="108" stroke="#0f0"/>
<use href="#o8x1" x="173" y="75" stroke="#0f0"/>
<use href="#s12x2" x="291" y="33" stroke="#00f"/>
<use href="#o9x1" x="318" y="42" stroke="#00f"/>
<use href="#o9x1" x="83" y="155" stroke="#00f"/>
</g>
<g id="outer">
<path d="M358 154h1M356 155h2M355 156h1M353 157h2M352 158h1" stroke="#fff"/>
<use href="#o10x2" x="365" y="148" stroke="#00f"/>
<path d="M348 160h1M347 161h3M348 162h1M322 178h1M321 179h3M322 180h1" stroke="#00f"/>
<path d="M247 93h2M245 94h2M243 95h2M241 96h2M239 97h2M237 98h2M235 99h2M233 100h2M342 165h1M340 166h1M338 168h1M336 169h1M334 170h1M332 172h1M330 173h1M328 175h1M326 176h1" stroke="#fff"/>
<use href="#o9x2" x="248" y="84" stroke="#00f"/>
<path d="M234 104h1M233 105h3M234 106h1M235 135h1M234 136h3M235 137h1" stroke="#00f"/>
<path d="M234 111h1M234 113h1M234 115h1M234 117h1M234 119h1M235 121h1M235 123h1M235 125h1M235 127h1M235 129h1M235 131h1M114 164h1M115 165h2M117 166h1M118 167h2M120 168h1" stroke="#fff"/>
<use href="#o8x2" x="105" y="159" stroke="#0f0"/>
<path d="M124 169h1M123 170h3M124 171h1M151 185h1M150 186h3M151 187h1" stroke="#0f0"/>
<path d="M210 96h2M212 97h4M216 98h3M219 99h3M222 100h4M226 101h2M129 173h1M131 174h1M133 175h1M135 177h1M137 178h1M139 179h1M141 180h1M143 182h1M145 183h1M147 184h1" stroke="#fff"/>
<use href="#o7x2" x="209" y="86" stroke="#ff0"/>
<path d="M227 104h1M226 105h3M227 106h1M230 136h1M229 137h3M230 138h1" stroke="#ff0"/>
<path d="M228 112h1M228 114h1M228 116h1M229 118h1M229 120h1M229 122h1M229 124h1M229 126h1M230 128h1M230 130h1M230 132h1M104 277h2M101 278h3M99 279h2" stroke="#fff"/>
<use href="#o6x2" x="89" y="282" stroke="#f00"/>
<path d="M140 266h1M139 267h3M140 268h1M110 275h1M109 276h3M110 277h1" stroke="#f00"/>
<path d="M269 96h1M269 97h1M268 98h1M268 99h1M268 100h1M268 101h1M267 102h1M267 103h1M136 268h1M132 269h1M134 269h1M128 270h1M130 270h1M126 271h1M122 272h1M124 272h1M118 273h1M120 273h1M116 274h1" stroke="#fff"/>
<use href="#o5x2" x="271" y="87" stroke="#f00"/>
<path d="M266 107h1M265 108h3M266 109h1M260 137h1M259 138h3M260 139h1" stroke="#f00"/>
<path d="M181 105h1M182 106h1M182 107h1M183 108h1M183 109h1M184 110h1M184 111h1M265 114h1M264 116h1M264 118h1M264 120h1M263 122h1M263 124h1M263 126h1M262 128h1M262 130h1M261 132h1M261 134h1" stroke="#fff"/>
<use href="#o4x2" x="178" y="96" stroke="#ff0"/>
<path d="M186 115h1M185 116h3M186 117h1M199 144h1M198 145h3M199 146h1" stroke="#ff0"/>
<path d="M289 102h1M289 103h1M288 104h1M288 105h1M288 106h1M288 107h1M287 108h1M287 109h1M188 122h1M189 124h1M190 126h1M191 128h1M192 130h1M193 132h1M194 134h1M195 136h1M196 138h1M197 140h1" stroke="#fff"/>
<use href="#o3x2" x="292" y="93" stroke="#0f0"/>
<path d="M285 112h1M284 113h3M285 114h1M274 141h1M273 142h3M274 143h1" stroke="#0f0"/>
<path d="M283 120h1M282 122h1M281 124h1M280 126h1M280 128h1M279 130h1M278 132h1M277 134h1M277 136h1M276 138h1M95 217h4M99 218h4" stroke="#fff"/>
<use href="#o2x2" x="85" y="216" stroke="#00f"/>
<path d="M106 218h1M105 219h3M106 220h1M137 223h1M136 224h3M137 225h1" stroke="#00f"/>
<path d="M230 93h1M230 94h1M229 95h1M229 96h1M229 97h1M229 98h1M228 99h1M228 100h1M228 101h1M113 220h1M115 220h1M117 221h1M119 221h1M121 221h1M123 222h1M125 222h1M127 222h1M129 222h1M131 223h1M133 223h1" stroke="#fff"/>
<use href="#o1x2" x="229" y="84" stroke="#f00"/>
<path d="M228 104h1M227 105h3M228 106h1M231 135h1M230 136h3M231 137h1" stroke="#f00"/>
<path d="M229 112h1M229 114h1M229 116h1M230 118h1M230 120h1M230 122h1M230 124h1M230 126h1M231 128h1M231 130h1M231 132h1" stroke="#fff"/>
</g>
<g id="inner">
<path d="M332 172h1M330 173h2M329 174h1M327 175h2M326 176h1" stroke="#fff"/>
<use href="#o10x2" x="340" y="167" stroke="#00f"/>
<path d="M322 178h1M321 179h3M322 180h1" stroke="#00f"/>
<path d="M247 124h1M245 125h2M243 126h2M241 127h2M240 128h1M238 129h2M236 130h2M235 131h1" stroke="#fff"/>
<use href="#o9x2" x="247" y="115" stroke="#00f"/>
<path d="M235 135h1M234 136h3M235 137h1" stroke="#00f"/>
<path d="M141 180h1M142 181h2M144 182h1M145 183h2M147 184h1" stroke="#fff"/>
<use href="#o8x2" x="132" y="175" stroke="#0f0"/>
<path d="M151 185h1M150 186h3M151 187h1" stroke="#0f0"/>
<path d="M214 127h2M216 128h3M219 129h3M222 130h4M226 131h3M229 132h2" stroke="#fff"/>
<use href="#o7x2" x="212" y="118" stroke="#ff0"/>
<path d="M230 136h1M229 137h3M230 138h1" stroke="#ff0"/>
<path d="M135 268h2M131 269h4M129 270h2" stroke="#fff"/>
<use href="#o6x2" x="119" y="273" stroke="#f00"/>
<path d="M140 266h1M139 267h3M140 268h1" stroke="#f00"/>
<path d="M263 127h1M263 128h1M262 129h1M262 130h1M262 131h1M262 132h1M261 133h1M261 134h1" stroke="#fff"/>
<use href="#o5x2" x="265" y="117" stroke="#f00"/>
<path d="M260 137h1M259 138h3M260 139h1" stroke="#f00"/>
<path d="M194 134h1M195 135h1M195 136h1M196 137h1M196 138h1M197 139h1M197 140h1" stroke="#fff"/>
<use href="#o4x2" x="190" y="125" stroke="#ff0"/>
<path d="M199 144h1M198 145h3M199 146h1" stroke="#ff0"/>
<path d="M279 132h1M278 133h1M278 134h1M277 135h1M277 136h1M276 137h1M276 138h1" stroke="#fff"/>
<use href="#o3x2" x="283" y="123" stroke="#0f0"/>
<path d="M274 141h1M273 142h3M274 143h1" stroke="#0f0"/>
<path d="M125 222h4M129 223h5" stroke="#fff"/>
<use href="#o2x2" x="116" y="220" stroke="#00f"/>
<path d="M137 223h1M136 224h3M137 225h1" stroke="#00f"/>
<path d="M231 124h1M231 125h1M231 126h1M231 127h1M231 128h1M231 129h1M231 130h1M231 131h1M231 132h1" stroke="#fff"/>
<use href="#o1x2" x="230" y="115" stroke="#f00"/>
<path d="M231 135h1M230 136h3M231 137h1" stroke="#f00"/>
</g>
<g id="aspects">
<path d="M319 182h1" stroke="#ff0"/>
<path d="M230 141h2M232 142h2M234 143h2M236 144h2M238 145h2M240 146h2M242 147h3M245 148h2M247 149h2M249 150h2M251 151h2M253 152h2M255 153h3M258 154h2M260 155h2M262 156h2M264 157h2M266 158h2M268 159h3M271 160h2M273 161h2M275 162h2M277 163h2M279 164h3M282 165h2M284 166h2M286 167h2M288 168h2M290 169h2M292 170h3M295 171h2M297 172h2M299 173h2M301 174h2M303 175h2M305 176h3M308 177h2M310 178h2M312 179h2M314 180h2M316 181h2M318 182h2" stroke="#0ff"/>
<path d="M231 141h2M235 141h1M155 189h1" stroke="#ff0"/>
<path d="M230 141h2M232 142h2M234 143h2M236 144h2M238 145h2M240 146h2M242 147h3M245 148h2M247 149h2M249 150h2M251 151h2M253 152h2M255 153h3M258 154h2M260 155h2M262 156h2M264 157h2M266 158h2M268 159h3M271 160h2M273 161h2M275 162h2M277 163h2M279 164h3M282 165h2M284 166h2M286 167h2M288 168h2M290 169h2M292 170h3M295 171h2M297 172h2M299 173h2M301 174h2M303 175h2M305 176h3M308 177h2M310 178h2M312 179h2M314 180h2M316 181h2M318 182h2" stroke="#0ff"/>
<path d="M230 141h2M234 141h1M145 266h1" stroke="#ff0"/>
<path d="M259 143h1M256 146h1M253 149h1M251 152h1M248 155h1M245 158h1M242 161h1M240 164h1M237 167h1M234 170h1M231 173h1M228 176h1M226 179h1M223 182h1M220 185h1M217 188h1M215 191h1M212 194h1M209 197h1M206 200h1M203 203h1M201 206h1M198 209h1M195 212h1M192 215h1M189 218h1M187 221h1M184 224h1M181 227h1M178 230h1M176 233h1M173 236h1M170 239h1M167 242h1M164 245h1M162 248h1M159 251h1M156 254h1M153 257h1M151 260h1M148 263h1M145 266h1" stroke="#0f0"/>
<path d="M259 143h1" stroke="#ff0"/>
<path d="M259 143h1M255 146h1M251 149h1M247 151h1M243 154h1M239 157h1M235 160h1M231 162h1M227 165h1M223 168h1M219 171h1M215 173h1M211 176h1M207 179h1M203 182h1M199 185h1M195 187h1M191 190h1M187 193h1M183 196h1M179 198h1M175 201h1M171 204h1M167 207h1M163 209h1M159 212h1M155 215h1M151 218h1M147 221h1M143 223h1" stroke="#f00"/>
<path d="M200 149h1" stroke="#ff0"/>
<path d="M200 149h1M197 153h1M194 157h1M191 161h1M188 165h1M185 169h1M181 173h1M178 177h1M175 181h1M172 185h1M169 189h1M166 193h1M163 197h1M160 201h1M157 205h1M154 209h1M151 213h1M147 217h1M144 221h1" stroke="#0ff"/>
<path d="M272 147h1" stroke="#ff0"/>
<path d="M258 144h1M254 146h1M250 149h1M246 152h1M242 155h1M238 158h1M234 160h1M230 163h1M226 166h1M222 169h1M218 171h1M214 174h1M210 177h1M206 180h1M202 182h1M198 185h1M194 188h1M190 191h1M186 194h1M182 196h1M178 199h1M174 202h1M170 205h1M166 207h1M162 210h1M158 213h1M154 216h1M150 218h1M146 221h1M142 224h1" stroke="#f00"/>
<path d="M198 152h1M195 156h1M191 160h1M188 164h1M185 168h1M182 172h1M179 176h1M176 180h1M173 184h1M170 188h1M167 192h1M164 196h1M161 200h1M157 204h1M154 208h1M151 212h1M148 216h1M145 220h1M142 224h1" stroke="#0ff"/>
<path d="M230 141h2M234 141h1M142 224h1" stroke="#ff0"/>
</g>
<g id="sidebar-glyphs">
<use href="#s3x1" x="628" y="190" stroke="#f00"/>
<use href="#s4x1" x="628" y="200" stroke="#ff0"/>
<use href="#s5x1" x="628" y="210" stroke="#0f0"/>
<use href="#s6x1" x="628" y="220" stroke="#00f"/>
<use href="#s7x1" x="628" y="230" stroke="#f00"/>
<use href="#s8x1" x="628" y="240" stroke="#ff0"/>
<use href="#s9x1" x="628" y="250" stroke="#0f0"/>
<use href="#s10x1" x="628" y="260" stroke="#00f"/>
<use href="#s11x1" x="628" y="270" stroke="#f00"/>
<use href="#s12x1" x="628" y="280" stroke="#ff0"/>
<use href="#s1x1" x="628" y="290" stroke="#0f0"/>
<use href="#s2x1" x="628" y="300" stroke="#00f"/>
<use href="#o1x1" x="628" y="320" stroke="#f00"/>
<use href="#o2x1" x="628" y="330" stroke="#00f"/>
<use href="#o3x1" x="628" y="340" stroke="#0f0"/>
<use href="#o4x1" x="628" y="350" stroke="#ff0"/>
<use href="#o5x1" x="628" y="360" stroke="#f00"/>
<use href="#o6x1" x="628" y="370" stroke="#f00"/>
<use href="#o7x1" x="628" y="380" stroke="#ff0"/>
<use href="#o8x1" x="628" y="390" stroke="#0f0"/>
<use href="#o9x1" x="628" y="400" stroke="#00f"/>
<use href="#o10x1" x="628" y="410" stroke="#00f"/>
</g>
<g id="frame">
<path d="M0 0h640M0 1h1M479 1h1M639 1h1M0 2h1M479 2h1M639 2h1M0 3h1M479 3h1M639 3h1M0 4h1M479 4h1M639 4h1M0 5h1M479 5h1M639 5h1M0 6h1M479 6h1M639 6h1M0 7h1M479 7h1M639 7h1M0 8h1M479 8h1M639 8h1M0 9h1M479 9h1M639 9h1M0 10h1M479 10h1M639 10h1M0 11h1M479 11h1M639 11h1M0 12h1M479 12h1M639 12h1M0 13h1M479 13h1M639 13h1M0 14h1M479 14h1M639 14h1M0 15h1M479 15h1M639 15h1M0 16h1M479 16h1M639 16h1M0 17h1M479 17h1M639 17h1M0 18h1M479 18h1M639 18h1M0 19h1M479 19h1M639 19h1M0 20h1M479 20h1M639 20h1M0 21h1M479 21h1M639 21h1M0 22h1M479 22h1M639 22h1M0 23h1M479 23h1M639 23h1M0 24h1M479 24h1M639 24h1M0 25h1M479 25h1M639 25h1M0 26h1M479 26h1M639 26h1M0 27h1M479 27h1M639 27h1M0 28h1M479 28h1M639 28h1M0 29h1M479 29h1M639 29h1M0 30h1M479 30h1M639 30h1M0 31h1M479 31h1M639 31h1M0 32h1M479 32h1M639 32h1M0 33h1M479 33h1M639 33h1M0 34h1M479 34h1M639 34h1M0 35h1M479 35h1M639 35h1M0 36h1M479 36h1M639 36h1M0 37h1M479 37h1M639 37h1M0 38h1M479 38h1M639 38h1M0 39h1M479 39h1M639 39h1M0 40h1M479 40h1M639 40h1M0 41h1M479 41h1M639 41h1M0 42h1M479 42h1M639 42h1M0 43h1M479 43h1M639 43h1M0 44h1M479 44h1M639 44h1M0 45h1M479 45h1M639 45h1M0 46h1M479 46h1M639 46h1M0 47h1M479 47h1M639 47h1M0 48h1M479 48h1M639 48h1M0 49h1M479 49h1M639 49h1M0 50h1M479 50h1M639 50h1M0 51h1M479 51h1M639 51h1M0 52h1M479 52h1M639 52h1M0 53h1M479 53h1M639 53h1M0 54h1M479 54h1M639 54h1M0 55h1M479 55h1M639 55h1M0 56h1M479 56h1M639 56h1M0 57h1M479 57h1M639 57h1M0 58h1M479 58h1M639 58h1M0 59h1M479 59h1M639 59h1M0 60h1M479 60h1M639 60h1M0 61h1M479 61h1M639 61h1M0 62h1M479 62h1M639 62h1M0 63h1M479 63h1M639 63h1M0 64h1M479 64h1M639 64h1M0 65h1M479 65h1M639 65h1M0 66h1M479 66h1M639 66h1M0 67h1M479 67h1M639 67h1M0 68h1M479 68h1M639 68h1M0 69h1M479 69h1M639 69h1M0 70h1M479 70h1M639 70h1M0 71h1M479 71h1M639 71h1M0 72h1M479 72h1M639 72h1M0 73h1M479 73h1M639 73h1M0 74h1M479 74h1M639 74h1M0 75h1M479 75h1M639 75h1M0 76h1M479 76h1M639 76h1M0 77h1M479 77h1M639 77h1M0 78h1M479 78h1M639 78h1M0 79h1M479 79h1M639 79h1M0 80h1M479 80h1M639 80h1M0 81h1M479 81h1M639 81h1M0 82h1M479 82h1M639 82h1M0 83h1M479 83h1M639 83h1M0 84h1M479 84h1M639 84h1M0 85h1M479 85h1M639 85h1M0 86h1M479 86h1M639 86h1M0 87h1M479 87h1M639 87h1M0 88h1M479 88h1M639 88h1M0 89h1M479 89h1M639 89h1M0 90h1M479 90h1M639 90h1M0 91h1M479 91h1M639 91h1M0 92h1M479 92h1M639 92h1M0 93h1M479 93h1M639 93h1M0 94h1M479 94h1M639 94h1M0 95h1M479 95h1M639 95h1M0 96h1M479 96h1M639 96h1M0 97h1M479 97h1M639 97h1M0 98h1M479 98h1M639 98h1M0 99h1M479 99h1M639 99h1M0 100h1M479 100h1M639 100h1M0 101h1M479 101h1M639 101h1M0 102h1M479 102h1M639 102h1M0 103h1M479 103h1M639 103h1M0 104h1M479 104h1M639 104h1M0 105h1M479 105h1M639 105h1M0 106h1M479 106h1M639 106h1M0 107h1M479 107h1M639 107h1M0 108h1M479 108h1M639 108h1M0 109h1M479 109h1M639 109h1M0 110h1M479 110h1M639 110h1M0 111h1M479 111h1M639 111h1M0 112h1M479 112h1M639 112h1M0 113h1M479 113h1M639 113h1M0 114h1M479 114h1M639 114h1M0 115h1M479 115h1M639 115h1M0 116h1M479 116h1M639 116h1M0 117h1M479 117h1M639 117h1M0 118h1M479 118h1M639 118h1M0 119h1M479 119h1M639 119h1M0 120h1M479 120h1M639 120h1M0 121h1M479 121h1M639 121h1M0 122h1M479 122h1M639 122h1M0 123h1M479 123h1M639 123h1M0 124h1M479 124h1M639 124h1M0 125h1M479 125h1M639 125h1M0 126h1M479 126h1M639 126h1M0 127h1M479 127h1M639 127h1M0 128h1M479 128h1M639 128h1M0 129h1M479 129h1M639 129h1M0 130h1M479 130h1M639 130h1M0 131h1M479 131h1M639 131h1M0 132h1M479 132h1M639 132h1M0 133h1M479 133h1M639 133h1M0 134h1M479 134h1M639 134h1M0 135h1M479 135h1M639 135h1M0 136h1M479 136h1M639 136h1M0 137h1M479 137h1M639 137h1M0 138h1M479 138h1M639 138h1M0 139h1M479 139h1M639 139h1M0 140h1M479 140h1M639 140h1M0 141h1M479 141h1M639 141h1M0 142h1M479 142h1M639 142h1M0 143h1M479 143h1M639 143h1M0 144h1M479 144h1M639 144h1M0 145h1M479 145h1M639 145h1M0 146h1M479 146h1M639 146h1M0 147h1M479 147h1M639 147h1M0 148h1M479 148h1M639 148h1M0 149h1M479 149h1M639 149h1M0 150h1M479 150h1M639 150h1M0 151h1M479 151h1M639 151h1M0 152h1M479 152h1M639 152h1M0 153h1M479 153h1M639 153h1M0 154h1M479 154h1M639 154h1M0 155h1M479 155h1M639 155h1M0 156h1M479 156h1M639 156h1M0 157h1M479 157h1M639 157h1M0 158h1M479 158h1M639 158h1M0 159h1M479 159h1M639 159h1M0 160h1M479 160h1M639 160h1M0 161h1M479 161h1M639 161h1M0 162h1M479 162h1M639 162h1M0 163h1M479 163h1M639 163h1M0 164h1M479 164h1M639 164h1M0 165h1M479 165h1M639 165h1M0 166h1M479 166h1M639 166h1M0 167h1M479 167h1M639 167h1M0 168h1M479 168h1M639 168h1M0 169h1M479 169h1M639 169h1M0 170h1M479 170h1M639 170h1M0 171h1M479 171h1M639 171h1M0 172h1M479 172h1M639 172h1M0 173h1M479 173h1M639 173h1M0 174h1M479 174h1M639 174h1M0 175h1M479 175h1M639 175h1M0 176h1M479 176h1M639 176h1M0 177h1M479 177h1M639 177h1M0 178h1M479 178h1M639 178h1M0 179h1M479 179h1M639 179h1M0 180h1M479 180h1M639 180h1M0 181h1M479 181h1M639 181h1M0 182h1M479 182h1M639 182h1M0 183h1M479 183h1M639 183h1M0 184h1M479 184h1M639 184h1M0 185h1M479 185h1M639 185h1M0 186h1M479 186h1M639 186h1M0 187h1M479 187h1M639 187h1M0 188h1M479 188h1M639 188h1M0 189h1M479 189h1M639 189h1M0 190h1M479 190h1M639 190h1M0 191h1M479 191h1M639 191h1M0 192h1M479 192h1M639 192h1M0 193h1M479 193h1M639 193h1M0 194h1M479 194h1M639 194h1M0 195h1M479 195h1M639 195h1M0 196h1M479 196h1M639 196h1M0 197h1M479 197h1M639 197h1M0 198h1M479 198h1M639 198h1M0 199h1M479 199h1M639 199h1M0 200h1M479 200h1M639 200h1M0 201h1M479 201h1M639 201h1M0 202h1M479 202h1M639 202h1M0 203h1M479 203h1M639 203h1M0 204h1M479 204h1M639 204h1M0 205h1M479 205h1M639 205h1M0 206h1M479 206h1M639 206h1M0 207h1M479 207h1M639 207h1M0 208h1M479 208h1M639 208h1M0 209h1M479 209h1M639 209h1M0 210h1M479 210h1M639 210h1M0 211h1M479 211h1M639 211h1M0 212h1M479 212h1M639 212h1M0 213h1M479 213h1M639 213h1M0 214h1M479 214h1M639 214h1M0 215h1M479 215h1M639 215h1M0 216h1M479 216h1M639 216h1M0 217h1M479 217h1M639 217h1M0 218h1M479 218h1M639 218h1M0 219h1M479 219h1M639 219h1M0 220h1M479 220h1M639 220h1M0 221h1M479 221h1M639 221h1M0 222h1M479 222h1M639 222h1M0 223h1M479 223h1M639 223h1M0 224h1M479 224h1M639 224h1M0 225h1M479 225h1M639 225h1M0 226h1M479 226h1M639 226h1M0 227h1M479 227h1M639 227h1M0 228h1M479 228h1M639 228h1M0 229h1M479 229h1M639 229h1M0 230h1M479 230h1M639 230h1M0 231h1M479 231h1M639 231h1M0 232h1M479 232h1M639 232h1M0 233h1M479 233h1M639 233h1M0 234h1M479 234h1M639 234h1M0 235h1M479 235h1M639 235h1M0 236h1M479 236h1M639 236h1M0 237h1M479 237h1M639 237h1M0 238h1M479 238h1M639 238h1M0 239h1M479 239h1M639 239h1M0 240h1M479 240h1M639 240h1M0 241h1M479 241h1M639 241h1M0 242h1M479 242h1M639 242h1M0 243h1M479 243h1M639 243h1M0 244h1M479 244h1M639 244h1M0 245h1M479 245h1M639 245h1M0 246h1M479 246h1M639 246h1M0 247h1M479 247h1M639 247h1M0 248h1M479 248h1M639 248h1M0 249h1M479 249h1M639 249h1M0 250h1M479 250h1M639 250h1M0 251h1M479 251h1M639 251h1M0 252h1M479 252h1M639 252h1M0 253h1M479 253h1M639 253h1M0 254h1M479 254h1M639 254h1M0 255h1M479 255h1M639 255h1M0 256h1M479 256h1M639 256h1M0 257h1M479 257h1M639 257h1M0 258h1M479 258h1M639 258h1M0 259h1M479 259h1M639 259h1M0 260h1M479 260h1M639 260h1M0 261h1M479 261h1M639 261h1M0 262h1M479 262h1M639 262h1M0 263h1M479 263h1M639 263h1M0 264h1M479 264h1M639 264h1M0 265h1M479 265h1M639 265h1M0 266h1M479 266h1M639 266h1M0 267h1M479 267h1M639 267h1M0 268h1M479 268h1M639 268h1M0 269h1M479 269h1M639 269h1M0 270h1M479 270h1M639 270h1M0 271h1M479 271h1M639 271h1M0 272h1M479 272h1M639 272h1M0 273h1M479 273h1M639 273h1M0 274h1M479 274h1M639 274h1M0 275h1M479 275h1M639 275h1M0 276h1M479 276h1M639 276h1M0 277h1M479 277h1M639 277h1M0 278h1M479 278h1M639 278h1M0 279h1M479 279h1M639 279h1M0 280h1M479 280h1M639 280h1M0 281h1M479 281h1M639 281h1M0 282h1M479 282h1M639 282h1M0 283h1M479 283h1M639 283h1M0 284h1M479 284h1M639 284h1M0 285h1M479 285h1M639 285h1M0 286h1M479 286h1M639 286h1M0 287h1M479 287h1M639 287h1M0 288h1M479 288h1M639 288h1M0 289h1M479 289h1M639 289h1M0 290h1M479 290h1M639 290h1M0 291h1M479 291h1M639 291h1M0 292h1M479 292h1M639 292h1M0 293h1M479 293h1M639 293h1M0 294h1M479 294h1M639 294h1M0 295h1M479 295h1M639 295h1M0 296h1M479 296h1M639 296h1M0 297h1M479 297h1M639 297h1M0 298h1M479 298h1M639 298h1M0 299h1M479 299h1M639 299h1M0 300h1M479 300h1M639 300h1M0 301h1M479 301h1M639 301h1M0 302h1M479 302h1M639 302h1M0 303h1M479 303h1M639 303h1M0 304h1M479 304h1M639 304h1M0 305h1M479 305h1M639 305h1M0 306h1M479 306h1M639 306h1M0 307h1M479 307h1M639 307h1M0 308h1M479 308h1M639 308h1M0 309h1M479 309h1M639 309h1M0 310h1M479 310h1M639 310h1M0 311h1M479 311h1M639 311h1M0 312h1M479 312h1M639 312h1M0 313h1M479 313h1M639 313h1M0 314h1M479 314h1M639 314h1M0 315h1M479 315h1M639 315h1M0 316h1M479 316h1M639 316h1M0 317h1M479 317h1M639 317h1M0 318h1M479 318h1M639 318h1M0 319h1M479 319h1M639 319h1M0 320h1M479 320h1M639 320h1M0 321h1M479 321h1M639 321h1M0 322h1M479 322h1M639 322h1M0 323h1M479 323h1M639 323h1M0 324h1M479 324h1M639 324h1M0 325h1M479 325h1M639 325h1M0 326h1M479 326h1M639 326h1M0 327h1M479 327h1M639 327h1M0 328h1M479 328h1M639 328h1M0 329h1M479 329h1M639 329h1M0 330h1M479 330h1M639 330h1M0 331h1M479 331h1M639 331h1M0 332h1M479 332h1M639 332h1M0 333h1M479 333h1M639 333h1M0 334h1M479 334h1M639 334h1M0 335h1M479 335h1M639 335h1M0 336h1M479 336h1M639 336h1M0 337h1M479 337h1M639 337h1M0 338h1M479 338h1M639 338h1M0 339h1M479 339h1M639 339h1M0 340h1M479 340h1M639 340h1M0 341h1M479 341h1M639 341h1M0 342h1M479 342h1M639 342h1M0 343h1M479 343h1M639 343h1M0 344h1M479 344h1M639 344h1M0 345h1M479 345h1M639 345h1M0 346h1M479 346h1M639 346h1M0 347h1M479 347h1M639 347h1M0 348h1M479 348h1M639 348h1M0 349h1M479 349h1M639 349h1M0 350h1M479 350h1M639 350h1M0 351h1M479 351h1M639 351h1M0 352h1M479 352h1M639 352h1M0 353h1M479 353h1M639 353h1M0 354h1M479 354h1M639 354h1M0 355h1M479 355h1M639 355h1M0 356h1M479 356h1M639 356h1M0 357h1M479 357h1M639 357h1M0 358h1M479 358h1M639 358h1M0 359h1M479 359h1M639 359h1M0 360h1M479 360h1M639 360h1M0 361h1M479 361h1M639 361h1M0 362h1M479 362h1M639 362h1M0 363h1M479 363h1M639 363h1M0 364h1M479 364h1M639 364h1M0 365h1M479 365h1M639 365h1M0 366h1M479 366h1M639 366h1M0 367h1M479 367h1M639 367h1M0 368h1M479 368h1M639 368h1M0 369h1M479 369h1M639 369h1M0 370h1M479 370h1M639 370h1M0 371h1M479 371h1M639 371h1M0 372h1M479 372h1M639 372h1M0 373h1M479 373h1M639 373h1M0 374h1M479 374h1M639 374h1M0 375h1M479 375h1M639 375h1M0 376h1M479 376h1M639 376h1M0 377h1M479 377h1M639 377h1M0 378h1M479 378h1M639 378h1M0 379h1M479 379h1M639 379h1M0 380h1M479 380h1M639 380h1M0 381h1M479 381h1M639 381h1M0 382h1M479 382h1M639 382h1M0 383h1M479 383h1M639 383h1M0 384h1M479 384h1M639 384h1M0 385h1M479 385h1M639 385h1M0 386h1M479 386h1M639 386h1M0 387h1M479 387h1M639 387h1M0 388h1M479 388h1M639 388h1M0 389h1M479 389h1M639 389h1M0 390h1M479 390h1M639 390h1M0 391h1M479 391h1M639 391h1M0 392h1M479 392h1M639 392h1M0 393h1M479 393h1M639 393h1M0 394h1M479 394h1M639 394h1M0 395h1M479 395h1M639 395h1M0 396h1M479 396h1M639 396h1M0 397h1M479 397h1M639 397h1M0 398h1M479 398h1M639 398h1M0 399h1M479 399h1M639 399h1M0 400h1M479 400h1M639 400h1M0 401h1M479 401h1M639 401h1M0 402h1M479 402h1M639 402h1M0 403h1M479 403h1M639 403h1M0 404h1M479 404h1M639 404h1M0 405h1M479 405h1M639 405h1M0 406h1M479 406h1M639 406h1M0 407h1M479 407h1M639 407h1M0 408h1M479 408h1M639 408h1M0 409h1M479 409h1M639 409h1M0 410h1M479 410h1M639 410h1M0 411h1M479 411h1M639 411h1M0 412h1M479 412h1M639 412h1M0 413h1M479 413h1M639 413h1M0 414h1M479 414h1M639 414h1M0 415h1M479 415h1M639 415h1M0 416h1M479 416h1M639 416h1M0 417h1M479 417h1M639 417h1M0 418h1M479 418h1M639 418h1M0 419h1M479 419h1M639 419h1M0 420h1M479 420h1M639 420h1M0 421h1M479 421h1M639 421h1M0 422h1M479 422h1M639 422h1M0 423h1M479 423h1M639 423h1M0 424h1M479 424h1M639 424h1M0 425h1M479 425h1M639 425h1M0 426h1M479 426h1M639 426h1M0 427h1M479 427h1M639 427h1M0 428h1M479 428h1M639 428h1M0 429h1M479 429h1M639 429h1M0 430h1M479 430h1M639 430h1M0 431h1M479 431h1M639 431h1M0 432h1M479 432h1M639 432h1M0 433h1M479 433h1M639 433h1M0 434h1M479 434h1M639 434h1M0 435h1M479 435h1M639 435h1M0 436h1M479 436h1M639 436h1M0 437h1M479 437h1M639 437h1M0 438h1M479 438h1M639 438h1M0 439h1M479 439h1M639 439h1M0 440h1M479 440h1M639 440h1M0 441h1M479 441h1M639 441h1M0 442h1M479 442h1M639 442h1M0 443h1M479 443h1M639 443h1M0 444h1M479 444h1M639 444h1M0 445h1M479 445h1M639 445h1M0 446h1M479 446h1M639 446h1M0 447h1M479 447h1M639 447h1M0 448h1M479 448h1M639 448h1M0 449h1M479 449h1M639 449h1M0 450h1M479 450h1M639 450h1M0 451h1M479 451h1M639 451h1M0 452h1M479 452h1M639 452h1M0 453h1M479 453h1M639 453h1M0 454h1M479 454h1M639 454h1M0 455h1M479 455h1M639 455h1M0 456h1M479 456h1M639 456h1M0 457h1M479 457h1M639 457h1M0 458h1M479 458h1M639 458h1M0 459h1M479 459h1M639 459h1M0 460h1M479 460h1M639 460h1M0 461h1M479 461h1M639 461h1M0 462h1M479 462h1M639 462h1M0 463h1M479 463h1M639 463h1M0 464h1M479 464h1M639 464h1M0 465h1M479 465h1M639 465h1M0 466h1M479 466h1M639 466h1M0 467h1M479 467h1M639 467h1M0 468h1M479 468h1M639 468h1M0 469h1M479 469h1M639 469h1M0 470h1M479 470h1M639 470h1M0 471h1M479 471h1M639 471h1M0 472h1M479 472h1M639 472h1M0 473h1M479 473h1M639 473h1M0 474h1M479 474h1M639 474h1M0 475h1M479 475h1M639 475h1M0 476h1M479 476h1M639 476h1M0 477h1M479 477h1M639 477h1M0 478h1M479 478h1M639 478h1M0 479h640" stroke="#c0c0c0"/>
</g>
</g>
<g id="housenums" filter="url(#crisp2)">
<text class="hn" x="64.5" y="274.5" fill="#f00">1</text>
<text class="hn" x="88.5" y="335.5" fill="#ff0">2</text>
<text class="hn" x="138.5" y="389.5" fill="#0f0">3</text>
<text class="hn" x="224.5" y="420.5" fill="#00f">4</text>
<text class="hn" x="333.5" y="393.5" fill="#f00">5</text>
<text class="hn" x="407.5" y="300.5" fill="#ff0">6</text>
<text class="hn" x="414.5" y="212.5" fill="#0f0">7</text>
<text class="hn" x="390.5" y="151.5" fill="#00f">8</text>
<text class="hn" x="340.5" y="97.5" fill="#f00">9</text>
<text class="hn hn2" x="247.024" y="66.5" fill="#ff0">10</text>
<text class="hn hn2" x="138.024" y="93.5" fill="#0f0">11</text>
<text class="hn hn2" x="64.024" y="186.5" fill="#00f">12</text>
</g>
<g id="text" filter="url(#crisp)">
<text class="sb" x="485.5" y="14" xml:space="preserve"><tspan fill="#fff">Astrolog 5.41G</tspan></text>
<text class="sb" x="485.5" y="24" xml:space="preserve"><tspan fill="#c0c0c0">Inner ring:</tspan></text>
<text class="sb" x="485.5" y="34" xml:space="preserve"><tspan fill="#c0c0c0">Chart of the Moment</tspan></text>
<text class="sb" x="485.5" y="44" xml:space="preserve"><tspan fill="#fff">Tue March 24, 2026</tspan></text>
<text class="sb" x="485.5" y="54" xml:space="preserve"><tspan fill="#fff">11:39:00am (DT -8:00 GMT)</tspan></text>
<text class="sb" x="485.5" y="64" xml:space="preserve"><tspan fill="#c0c0c0">San Francisco, CA</tspan></text>
<text class="sb" x="485.5" y="74" xml:space="preserve"><tspan fill="#c0c0c0">122°41'00&quot;W 37°79'00&quot;N</tspan></text>
<text class="sb" x="485.5" y="84" xml:space="preserve"><tspan fill="#c0c0c0">Outer ring - Transit:</tspan></text>
<text class="sb" x="485.5" y="94" xml:space="preserve"><tspan fill="#ff0">Tue March 24, 2026</tspan></text>
<text class="sb" x="485.5" y="104" xml:space="preserve"><tspan fill="#ff0"> 8:39:55pm (ST +2:00 GMT)</tspan></text>
<text class="sb" x="485.5" y="114" xml:space="preserve"><tspan fill="#c0c0c0"> 26°43'00&quot;E 58°23'00&quot;N</tspan></text>
<text class="sb" x="485.5" y="124" xml:space="preserve"><tspan fill="#c0c0c0">Placidus houses.</tspan></text>
<text class="sb" x="485.5" y="134" xml:space="preserve"><tspan fill="#c0c0c0">Tropical, Geocentric.</tspan></text>
<text class="sb" x="485.5" y="144" xml:space="preserve"><tspan fill="#ff0">Julian Day = 2461124.2777</tspan></text>
<text class="sb" x="485.5" y="154" xml:space="preserve"><tspan fill="#c0c0c0">Obliquity = 23°26'09&quot;</tspan></text>
<text class="sb" x="485.5" y="164" xml:space="preserve"><tspan fill="#c0c0c0">Sidereal time:  8:35:47</tspan></text>
<text class="sb" x="485.5" y="174" xml:space="preserve"><tspan fill="#c0c0c0">DeltaT =  95.4931</tspan></text>
<text class="sb" x="485.5" y="434" xml:space="preserve"><tspan fill="#c0c0c0">Fire: 4, Earth: 1,</tspan></text>
<text class="sb" x="485.5" y="444" xml:space="preserve"><tspan fill="#c0c0c0">Air : 2, Water: 3</tspan></text>
<text class="sb" x="485.5" y="454" xml:space="preserve"><tspan fill="#c0c0c0">Car: 5, Fix: 2, Mut: 3</tspan></text>
<text class="sb" x="485.5" y="464" xml:space="preserve"><tspan fill="#c0c0c0">Yang: 6, Yin: 4</tspan></text>
<text class="sb" x="485.5" y="474" xml:space="preserve"><tspan fill="#c0c0c0">M: 9, N: 1, A: 9, D: 1</tspan></text>
<text class="sb" x="485.5" y="194" xml:space="preserve"><tspan fill="#f00"> 1st house: </tspan><tspan fill="#0f0">29Gem24</tspan></text>
<text class="sb" x="485.5" y="204" xml:space="preserve"><tspan fill="#ff0"> 2nd house: </tspan><tspan fill="#00f">20Can03</tspan></text>
<text class="sb" x="485.5" y="214" xml:space="preserve"><tspan fill="#0f0"> 3rd house: </tspan><tspan fill="#f00">11Leo36</tspan></text>
<text class="sb" x="485.5" y="224" xml:space="preserve"><tspan fill="#00f"> 4th house: </tspan><tspan fill="#ff0"> 7Vir38</tspan></text>
<text class="sb" x="485.5" y="234" xml:space="preserve"><tspan fill="#f00"> 5th house: </tspan><tspan fill="#0f0">11Lib26</tspan></text>
<text class="sb" x="485.5" y="244" xml:space="preserve"><tspan fill="#ff0"> 6th house: </tspan><tspan fill="#00f">21Sco47</tspan></text>
<text class="sb" x="485.5" y="254" xml:space="preserve"><tspan fill="#0f0"> 7th house: </tspan><tspan fill="#f00">29Sag24</tspan></text>
<text class="sb" x="485.5" y="264" xml:space="preserve"><tspan fill="#00f"> 8th house: </tspan><tspan fill="#ff0">20Cap03</tspan></text>
<text class="sb" x="485.5" y="274" xml:space="preserve"><tspan fill="#f00"> 9th house: </tspan><tspan fill="#0f0">11Aqu36</tspan></text>
<text class="sb" x="485.5" y="284" xml:space="preserve"><tspan fill="#ff0">10th house: </tspan><tspan fill="#00f"> 7Pis38</tspan></text>
<text class="sb" x="485.5" y="294" xml:space="preserve"><tspan fill="#0f0">11th house: </tspan><tspan fill="#f00">11Ari26</tspan></text>
<text class="sb" x="485.5" y="304" xml:space="preserve"><tspan fill="#00f">12th house: </tspan><tspan fill="#ff0">21Tau47</tspan></text>
<text class="sb" x="485.5" y="324" xml:space="preserve"><tspan fill="#f00"> Sun: </tspan><tspan fill="#f00"> 4Ari08</tspan><tspan fill="#c0c0c0">  + 0°00'</tspan></text>
<text class="sb" x="485.5" y="334" xml:space="preserve"><tspan fill="#00f">Moon: </tspan><tspan fill="#0f0">20Gem35</tspan><tspan fill="#c0c0c0">  + 5°07'</tspan></text>
<text class="sb" x="485.5" y="344" xml:space="preserve"><tspan fill="#0f0">Merc: </tspan><tspan fill="#00f"> 9Pis14</tspan><tspan fill="#c0c0c0">  + 0°04'</tspan></text>
<text class="sb" x="485.5" y="354" xml:space="preserve"><tspan fill="#ff0">Venu: </tspan><tspan fill="#f00">22Ari44</tspan><tspan fill="#c0c0c0">  - 0°43'</tspan></text>
<text class="sb" x="485.5" y="364" xml:space="preserve"><tspan fill="#f00">Mars: </tspan><tspan fill="#00f">17Pis28</tspan><tspan fill="#c0c0c0">  - 1°04'</tspan></text>
<text class="sb" x="485.5" y="374" xml:space="preserve"><tspan fill="#f00">Jupi: </tspan><tspan fill="#00f">15Can23</tspan><tspan fill="#c0c0c0">  + 0°22'</tspan></text>
<text class="sb" x="485.5" y="384" xml:space="preserve"><tspan fill="#ff0">Satu: </tspan><tspan fill="#f00"> 4Ari39</tspan><tspan fill="#c0c0c0">  - 2°07'</tspan></text>
<text class="sb" x="485.5" y="394" xml:space="preserve"><tspan fill="#0f0">Uran: </tspan><tspan fill="#ff0">28Tau28</tspan><tspan fill="#c0c0c0">  - 0°10'</tspan></text>
<text class="sb" x="485.5" y="404" xml:space="preserve"><tspan fill="#00f">Nept: </tspan><tspan fill="#f00"> 1Ari56</tspan><tspan fill="#c0c0c0">  - 1°18'</tspan></text>
<text class="sb" x="485.5" y="414" xml:space="preserve"><tspan fill="#00f">Plut: </tspan><tspan fill="#0f0"> 5Aqu05</tspan><tspan fill="#c0c0c0">  - 3°55'</tspan></text>
</g>
</svg>
</body></html>
